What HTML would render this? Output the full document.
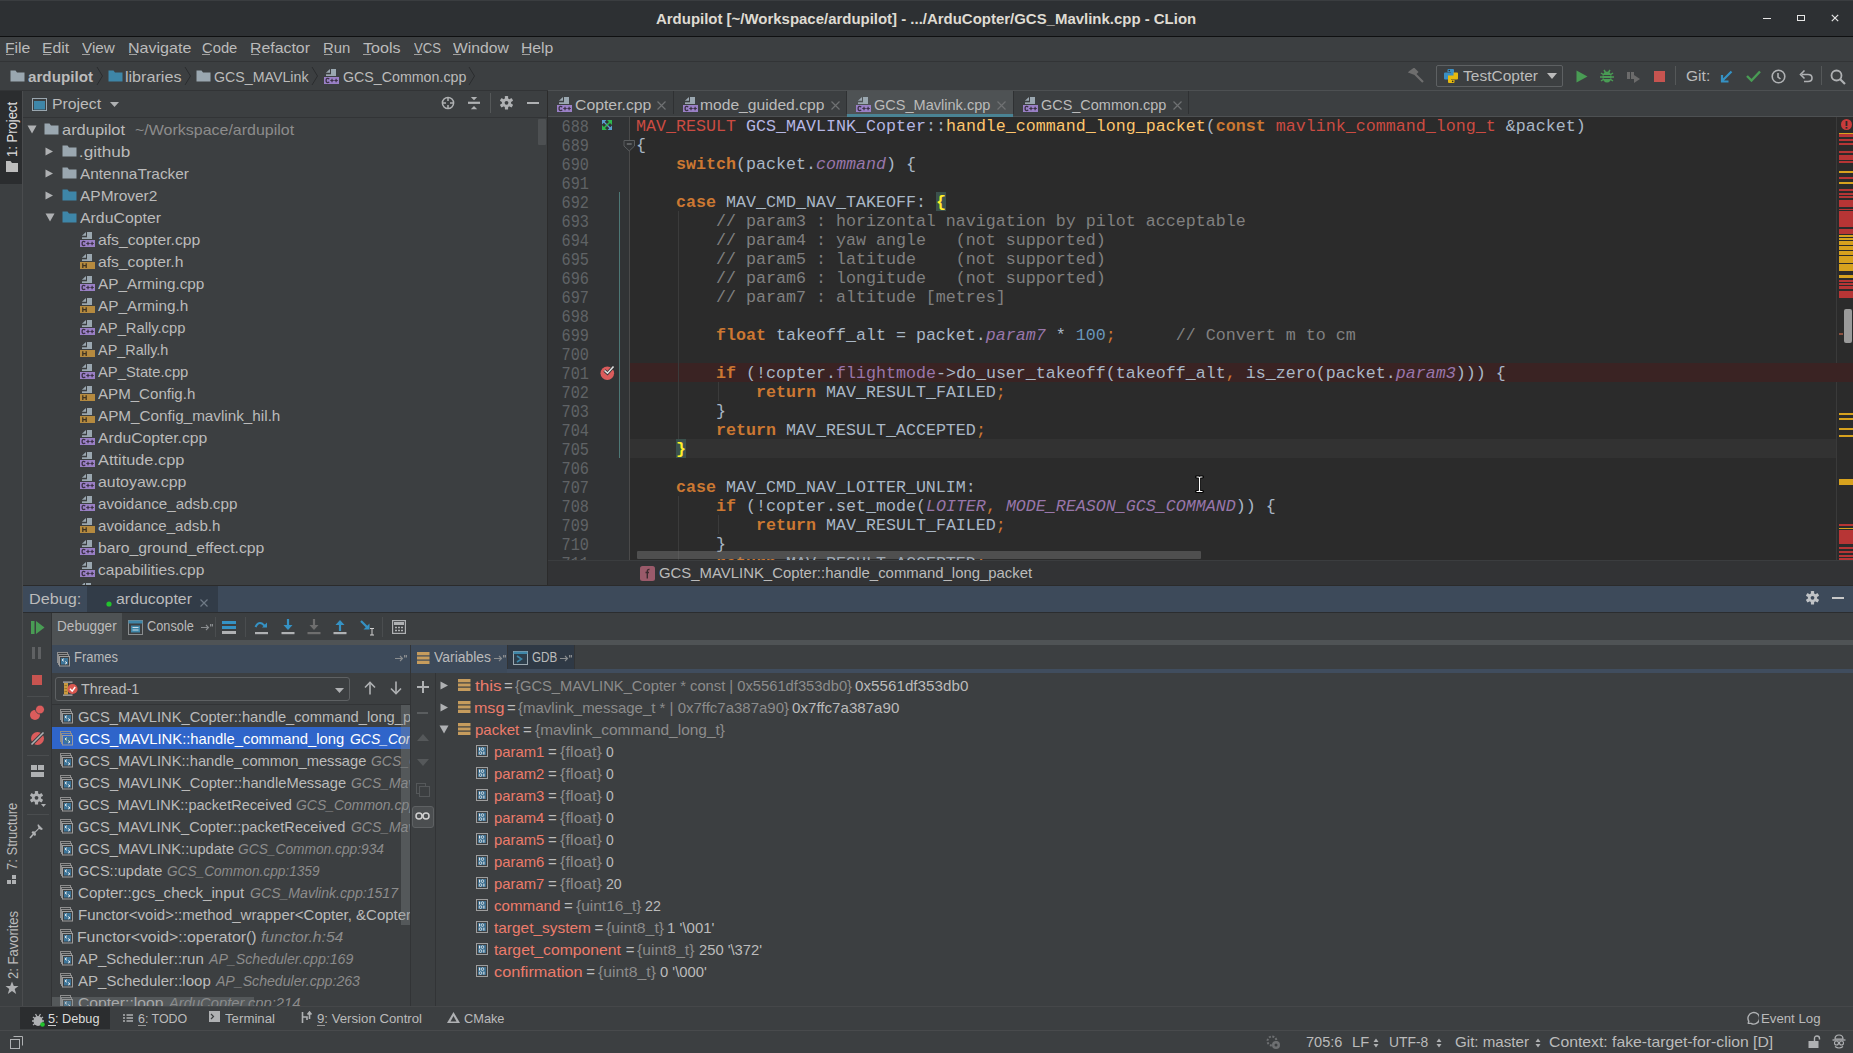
<!DOCTYPE html>
<html><head><meta charset="utf-8"><style>
html,body{margin:0;padding:0;width:1853px;height:1053px;overflow:hidden;background:#3c3f41;}
body{position:relative;font-family:'Liberation Sans', sans-serif;}
.a{position:absolute;}
.t{position:absolute;white-space:nowrap;line-height:0;transform-origin:0 0;}
.cl{position:absolute;white-space:pre;line-height:0;font-family:'Liberation Mono', monospace;font-size:16.667px;color:#a9b7c6;left:636px;}
.k{color:#cc7832;font-weight:bold}
.r{color:#cc4b42}
.f{color:#ffc66d}
.c{color:#808080}
.n{color:#6897bb}
.p{color:#9876aa}
.pi{color:#9876aa;font-style:italic}
.cls{color:#b5b6e3}
.o{color:#cc7832}
</style></head><body>
<div class="a" style="left:0px;top:0px;width:1853px;height:36px;background:#2d3033;"></div>
<div class="a" style="left:0px;top:0px;width:1853px;height:1px;background:#3a3d40;"></div>
<div class="a" style="left:0px;top:36px;width:1853px;height:1px;background:#0f1011;"></div>
<div class="t" id="t0" style="transform:translateX(0.00px) scaleX(0.9969);left:656px;top:19px;font-size:15px;color:#dfdbd2;font-weight:bold;">Ardupilot [~/Workspace/ardupilot] - .../ArduCopter/GCS_Mavlink.cpp - CLion</div>
<div class="a" style="left:1763px;top:18px;width:8px;height:1px;background:#e6e6e6;"></div>
<div class="a" style="left:1797px;top:15px;width:6px;height:4px;border:1.5px solid #e6e6e6"></div>
<svg class="a" style="left:1831px;top:14px;" width="8" height="8" viewBox="0 0 8 8"><path d="M0.8 0.8L7.2 7.2M7.2 0.8L0.8 7.2" stroke="#e6e6e6" stroke-width="1.2"/></svg>
<div class="a" style="left:0px;top:37px;width:1853px;height:24px;background:#3c3f41;"></div>
<div class="a" style="left:0px;top:61px;width:1853px;height:1px;background:#323436;"></div>
<div class="t" id="t1" style="transform:translateX(-1.05px) scaleX(1.0514);left:6px;top:48px;font-size:15px;color:#bbbbbb;">File</div>
<div class="a" style="left:6px;top:54px;width:8px;height:1px;background:#a0a0a0;"></div>
<div class="t" id="t2" style="transform:translateX(-1.05px) scaleX(1.0514);left:43px;top:48px;font-size:15px;color:#bbbbbb;">Edit</div>
<div class="a" style="left:43px;top:54px;width:8px;height:1px;background:#a0a0a0;"></div>
<div class="t" id="t3" style="transform:translateX(0.00px) scaleX(1.0182);left:82px;top:48px;font-size:15px;color:#bbbbbb;">View</div>
<div class="a" style="left:82px;top:54px;width:8px;height:1px;background:#a0a0a0;"></div>
<div class="t" id="t4" style="transform:translateX(-1.07px) scaleX(1.0716);left:129px;top:48px;font-size:15px;color:#bbbbbb;">Navigate</div>
<div class="a" style="left:129px;top:54px;width:8px;height:1px;background:#a0a0a0;"></div>
<div class="t" id="t5" style="transform:translateX(0.00px) scaleX(0.9854);left:202px;top:48px;font-size:15px;color:#bbbbbb;">Code</div>
<div class="a" style="left:202px;top:54px;width:8px;height:1px;background:#a0a0a0;"></div>
<div class="t" id="t6" style="transform:translateX(-1.06px) scaleX(1.0594);left:251px;top:48px;font-size:15px;color:#bbbbbb;">Refactor</div>
<div class="a" style="left:251px;top:54px;width:8px;height:1px;background:#a0a0a0;"></div>
<div class="t" id="t7" style="transform:translateX(-0.99px) scaleX(0.9933);left:324px;top:48px;font-size:15px;color:#bbbbbb;">Run</div>
<div class="a" style="left:324px;top:54px;width:8px;height:1px;background:#a0a0a0;"></div>
<div class="t" id="t8" style="transform:translateX(0.00px) scaleX(1.0719);left:363px;top:48px;font-size:15px;color:#bbbbbb;">Tools</div>
<div class="a" style="left:363px;top:54px;width:8px;height:1px;background:#a0a0a0;"></div>
<div class="t" id="t9" style="transform:translateX(0.00px) scaleX(0.8756);left:414px;top:48px;font-size:15px;color:#bbbbbb;">VCS</div>
<div class="a" style="left:414px;top:54px;width:8px;height:1px;background:#a0a0a0;"></div>
<div class="t" id="t10" style="transform:translateX(0.00px) scaleX(1.0464);left:453px;top:48px;font-size:15px;color:#bbbbbb;">Window</div>
<div class="a" style="left:453px;top:54px;width:8px;height:1px;background:#a0a0a0;"></div>
<div class="t" id="t11" style="transform:translateX(-1.05px) scaleX(1.0506);left:522px;top:48px;font-size:15px;color:#bbbbbb;">Help</div>
<div class="a" style="left:522px;top:54px;width:8px;height:1px;background:#a0a0a0;"></div>
<div class="a" style="left:0px;top:62px;width:1853px;height:28px;background:#3c3f41;"></div>
<div class="a" style="left:0px;top:90px;width:1853px;height:1px;background:#323436;"></div>
<div class="a" style="left:0px;top:91px;width:22px;height:915px;background:#3c3f41;"></div>
<div class="a" style="left:22px;top:91px;width:1px;height:915px;background:#4a4c4e;"></div>
<div class="a" style="left:0px;top:91px;width:22px;height:93px;background:#2b2d2f;"></div>
<div class="a" style="left:23px;top:91px;width:524px;height:494px;background:#3c3f41;"></div>
<div class="a" style="left:23px;top:117px;width:524px;height:1px;background:#323436;"></div>
<div class="a" style="left:547px;top:91px;width:1px;height:494px;background:#2b2b2b;"></div>
<div class="a" style="left:548px;top:91px;width:1305px;height:26px;background:#3c3f41;"></div>
<div class="a" style="left:847px;top:91px;width:166px;height:25px;background:#4e5254;"></div>
<div class="a" style="left:548px;top:90px;width:1305px;height:1px;background:#4d5052;"></div>
<div class="a" style="left:548px;top:116px;width:1305px;height:1px;background:#4d5052;"></div>
<div class="a" style="left:847px;top:114px;width:166px;height:3px;background:#4a8394;"></div>
<div class="a" style="left:548px;top:117px;width:1305px;height:443px;background:#2b2b2b;"></div>
<div class="a" style="left:548px;top:117px;width:82px;height:443px;background:#313335;"></div>
<div class="a" style="left:1836px;top:117px;width:1px;height:443px;background:#3a3a3a;"></div>
<div class="a" style="left:548px;top:560px;width:1305px;height:25px;background:#323335;"></div>
<div class="a" style="left:548px;top:560px;width:1305px;height:1px;background:#3b3d3f;"></div>
<div class="a" style="left:23px;top:585px;width:1830px;height:1px;background:#2b2b2b;"></div>
<div class="a" style="left:23px;top:586px;width:1830px;height:26px;background:#3d4a5a;"></div>
<div class="a" style="left:87px;top:586px;width:131px;height:26px;background:#323c48;"></div>
<div class="a" style="left:23px;top:612px;width:1830px;height:1px;background:#2b2d2f;"></div>
<div class="a" style="left:23px;top:613px;width:1830px;height:27px;background:#3c3f41;"></div>
<div class="a" style="left:52px;top:613px;width:70px;height:27px;background:#4e5254;"></div>
<div class="a" style="left:52px;top:640px;width:1801px;height:5px;background:#4f5355;"></div>
<div class="a" style="left:23px;top:613px;width:28px;height:393px;background:#3c3f41;"></div>
<div class="a" style="left:51px;top:613px;width:1px;height:393px;background:#323436;"></div>
<div class="a" style="left:52px;top:645px;width:358px;height:28px;background:#3d4a5a;"></div>
<div class="a" style="left:410px;top:645px;width:1px;height:361px;background:#323436;"></div>
<div class="a" style="left:411px;top:669px;width:1442px;height:4px;background:#404d5e;"></div>
<div class="a" style="left:411px;top:645px;width:96px;height:28px;background:#3d4a5a;"></div>
<div class="a" style="left:508px;top:645px;width:66px;height:24px;background:#2f3945;"></div>
<div class="a" style="left:435px;top:673px;width:1px;height:333px;background:#323436;"></div>
<div class="a" style="left:0px;top:1006px;width:1853px;height:1px;background:#454749;"></div>
<div class="a" style="left:0px;top:1007px;width:1853px;height:23px;background:#3c3f41;"></div>
<div class="a" style="left:20px;top:1007px;width:90px;height:22px;background:#2b2d2f;"></div>
<div class="a" style="left:0px;top:1030px;width:1853px;height:1px;background:#484a4c;"></div>
<div class="a" style="left:0px;top:1031px;width:1853px;height:22px;background:#3c3f41;"></div>
<svg class="a" style="left:10px;top:70px;" width="15" height="12" viewBox="0 0 15 12"><path d="M0.5 0.5H5.5L7 2.5H14.5V11.5H0.5Z" fill="#9aa7b0"/></svg>
<div class="t" id="t12" style="transform:translateX(0.00px) scaleX(1.0130);left:28px;top:77px;font-size:15px;color:#bbbbbb;font-weight:bold;">ardupilot</div>
<svg class="a" style="left:96px;top:66px;" width="8" height="20" viewBox="0 0 8 20"><path d="M1 1L6.5 10L1 19" stroke="#2a2c2e" stroke-width="1" fill="none"/></svg>
<svg class="a" style="left:108px;top:70px;" width="15" height="12" viewBox="0 0 15 12"><path d="M0.5 0.5H5.5L7 2.5H14.5V11.5H0.5Z" fill="#3e86a8"/></svg>
<div class="t" id="t13" style="transform:translateX(-1.08px) scaleX(1.0781);left:126px;top:77px;font-size:15px;color:#bbbbbb;">libraries</div>
<svg class="a" style="left:184px;top:66px;" width="8" height="20" viewBox="0 0 8 20"><path d="M1 1L6.5 10L1 19" stroke="#2a2c2e" stroke-width="1" fill="none"/></svg>
<svg class="a" style="left:196px;top:70px;" width="15" height="12" viewBox="0 0 15 12"><path d="M0.5 0.5H5.5L7 2.5H14.5V11.5H0.5Z" fill="#9aa7b0"/></svg>
<div class="t" id="t14" style="transform:translateX(0.00px) scaleX(0.9476);left:214px;top:77px;font-size:15px;color:#bbbbbb;">GCS_MAVLink</div>
<svg class="a" style="left:311px;top:66px;" width="8" height="20" viewBox="0 0 8 20"><path d="M1 1L6.5 10L1 19" stroke="#2a2c2e" stroke-width="1" fill="none"/></svg>
<svg class="a" style="left:324px;top:69px;" width="16" height="16" viewBox="0 0 16 16"><path d="M1.9 3.8L6 0V3.8Z" fill="#9aa7b0"/><rect x="7" y="0" width="5" height="7" fill="#9aa7b0"/><rect x="2" y="5.3" width="10" height="1.7" fill="#9aa7b0"/><rect x="0" y="8" width="15" height="7" fill="#9a80c6"/><path d="M5.2 10.1Q4.6 9.4 3.6 9.4Q2.1 9.4 2.1 11.5Q2.1 13.6 3.6 13.6Q4.6 13.6 5.2 12.9" stroke="#3b3145" stroke-width="1.3" fill="none"/><path d="M6.3 11.5h3.4M8 9.8v3.4M10.4 11.5h3.4M12.1 9.8v3.4" stroke="#3b3145" stroke-width="1.2"/></svg>
<div class="t" id="t15" style="transform:translateX(0.00px) scaleX(0.9483);left:343px;top:77px;font-size:15px;color:#bbbbbb;">GCS_Common.cpp</div>
<svg class="a" style="left:468px;top:66px;" width="8" height="20" viewBox="0 0 8 20"><path d="M1 1L6.5 10L1 19" stroke="#2a2c2e" stroke-width="1" fill="none"/></svg>
<svg class="a" style="left:1408px;top:68px;" width="17" height="15" viewBox="0 0 17 15"><path d="M2 4L6 1L9 4L7 6Z M6.5 5.5L15 14" stroke="#6e6e6e" stroke-width="2.2" fill="#6e6e6e"/></svg>
<div class="a" style="left:1436px;top:65px;width:125px;height:20px;border:1px solid #5e6163;border-radius:2px;background:#3c3f41"></div>
<svg class="a" style="left:1444px;top:69px;" width="14" height="14" viewBox="0 0 14 14"><path d="M4.5 0H9Q10 0 10 1V7.5H4.5V10.5H1Q0 10.5 0 9.5V4.5Q0 3.5 1 3.5H7V3H3.5V1Q3.5 0 4.5 0Z" fill="#3a8fc4"/><circle cx="5.3" cy="1.6" r="0.8" fill="#2b2b2b"/><path d="M9.5 14H5Q4 14 4 13V6.5H9.5V3.5H13Q14 3.5 14 4.5V9.5Q14 10.5 13 10.5H7V11H10.5V13Q10.5 14 9.5 14Z" fill="#e5b90f"/><circle cx="8.7" cy="12.4" r="0.8" fill="#2b2b2b"/></svg>
<div class="t" id="t16" style="transform:translateX(0.00px) scaleX(1.0340);left:1463px;top:76px;font-size:15px;color:#bbbbbb;">TestCopter</div>
<svg class="a" style="left:1547px;top:73px;" width="10" height="6" viewBox="0 0 10 6"><path d="M0 0H10L5 6Z" fill="#bbbbbb"/></svg>
<svg class="a" style="left:1576px;top:70px;" width="12" height="13" viewBox="0 0 12 13"><path d="M0.5 0.5L11.5 6.5L0.5 12.5Z" fill="#499c54"/></svg>
<svg class="a" style="left:1600px;top:68px;" width="14" height="15" viewBox="0 0 14 15"><ellipse cx="7" cy="9" rx="4.5" ry="5.5" fill="#499c54"/><path d="M1 5L13 13M13 5L1 13M0 9H14M4 2L5.5 4.5M10 2L8.5 4.5" stroke="#499c54" stroke-width="1.5"/><path d="M3.5 7.5H10.5M3.5 10.5H10.5" stroke="#3c3f41" stroke-width="1.2"/></svg>
<svg class="a" style="left:1627px;top:70px;" width="14" height="14" viewBox="0 0 14 14"><rect x="0" y="2" width="3" height="7" fill="#6b6b6b"/><rect x="4" y="2" width="3" height="7" fill="#6b6b6b"/><path d="M7 5L13 9L7 13Z" fill="#6b6b6b"/></svg>
<div class="a" style="left:1654px;top:71px;width:11px;height:11px;background:#c75450;"></div>
<div class="a" style="left:1675px;top:66px;width:1px;height:19px;background:#555859;"></div>
<div class="t" id="t17" style="transform:translateX(0.00px) scaleX(1.0376);left:1686px;top:76px;font-size:15px;color:#bbbbbb;">Git:</div>
<svg class="a" style="left:1720px;top:70px;" width="13" height="13" viewBox="0 0 13 13"><path d="M11.5 1.5L2 11M2 5V11.5H8.5" stroke="#3592c4" stroke-width="2.2" fill="none"/></svg>
<svg class="a" style="left:1746px;top:70px;" width="15" height="12" viewBox="0 0 15 12"><path d="M1 6L5.5 10.5L14 1.5" stroke="#499c54" stroke-width="2.4" fill="none"/></svg>
<svg class="a" style="left:1771px;top:69px;" width="15" height="15" viewBox="0 0 15 15"><circle cx="7.5" cy="7.5" r="6.3" stroke="#afb1b3" stroke-width="1.6" fill="none"/><path d="M7 4V8L9.5 10" stroke="#afb1b3" stroke-width="1.6" fill="none"/></svg>
<svg class="a" style="left:1799px;top:69px;" width="14" height="14" viewBox="0 0 14 14"><path d="M3 5.5H9Q13 5.5 13 9Q13 12.5 9 12.5H5" stroke="#afb1b3" stroke-width="1.6" fill="none"/><path d="M5.5 1.5L1.5 5.5L5.5 9.5" stroke="#afb1b3" stroke-width="1.6" fill="none"/></svg>
<div class="a" style="left:1821px;top:66px;width:1px;height:19px;background:#555859;"></div>
<svg class="a" style="left:1830px;top:69px;" width="16" height="16" viewBox="0 0 16 16"><circle cx="6.5" cy="6.5" r="5" stroke="#afb1b3" stroke-width="1.8" fill="none"/><path d="M10 10L15 15" stroke="#afb1b3" stroke-width="2.2"/></svg>
<svg class="a" style="left:32px;top:98px;" width="16" height="14" viewBox="0 0 16 14"><rect x="0.5" y="0.5" width="14" height="12" fill="none" stroke="#9aa7b0"/><rect x="2" y="3" width="11" height="8.5" fill="#3e86a8"/></svg>
<div class="t" id="t18" style="transform:translateX(-1.05px) scaleX(1.0534);left:53px;top:104px;font-size:15px;color:#bbbbbb;">Project</div>
<svg class="a" style="left:110px;top:102px;" width="9" height="5" viewBox="0 0 9 5"><path d="M0 0H9L4.5 5Z" fill="#afb1b3"/></svg>
<svg class="a" style="left:441px;top:96px;" width="14" height="14" viewBox="0 0 14 14"><circle cx="7" cy="7" r="5.6" stroke="#afb1b3" stroke-width="1.5" fill="none"/><path d="M7 1.5V5M7 9V12.5M1.5 7H5M9 7H12.5" stroke="#afb1b3" stroke-width="1.5"/></svg>
<svg class="a" style="left:467px;top:96px;" width="14" height="14" viewBox="0 0 14 14"><path d="M3.8 1H10.2L7 4.2Z" fill="#afb1b3"/><rect x="1" y="5.7" width="12" height="2.2" fill="#afb1b3"/><path d="M3.8 13.3H10.2L7 10Z" fill="#afb1b3"/></svg>
<div class="a" style="left:490px;top:93px;width:1px;height:20px;background:#555859;"></div>
<svg class="a" style="left:500px;top:96px;" width="13" height="14" viewBox="0 0 13 14"><g transform="translate(6.5 6.8)"><circle r="4.6" fill="#afb1b3"/><rect x="-1.6" y="-6.8" width="3.2" height="3" rx="0.6" fill="#afb1b3" transform="rotate(0)"/><rect x="-1.6" y="-6.8" width="3.2" height="3" rx="0.6" fill="#afb1b3" transform="rotate(60)"/><rect x="-1.6" y="-6.8" width="3.2" height="3" rx="0.6" fill="#afb1b3" transform="rotate(120)"/><rect x="-1.6" y="-6.8" width="3.2" height="3" rx="0.6" fill="#afb1b3" transform="rotate(180)"/><rect x="-1.6" y="-6.8" width="3.2" height="3" rx="0.6" fill="#afb1b3" transform="rotate(240)"/><rect x="-1.6" y="-6.8" width="3.2" height="3" rx="0.6" fill="#afb1b3" transform="rotate(300)"/><circle r="1.9" fill="#3c3f41"/></g></svg>
<div class="a" style="left:527px;top:102px;width:12px;height:2px;background:#afb1b3;"></div>
<div class="a" style="left:538px;top:119px;width:8px;height:26px;background:#4d5052;border-radius:1px"></div>
<svg class="a" style="left:27px;top:125px;" width="10" height="9" viewBox="0 0 10 9"><path d="M0.5 0.5H9.5L5 8.5Z" fill="#afb1b3"/></svg>
<svg class="a" style="left:44px;top:123px;" width="15" height="12" viewBox="0 0 15 12"><path d="M0.5 0.5H5.5L7 2.5H14.5V11.5H0.5Z" fill="#9aa7b0"/></svg>
<div class="t" id="t19" style="transform:translateX(0.00px) scaleX(1.0964);left:62px;top:130px;font-size:15px;color:#bbbbbb;">ardupilot</div>
<div class="t" id="t20" style="transform:translateX(0.00px) scaleX(1.0651);left:135px;top:130px;font-size:15px;color:#8c8c8c;">~/Workspace/ardupilot</div>
<svg class="a" style="left:45px;top:147px;" width="9" height="9" viewBox="0 0 9 9"><path d="M0.5 0.5L8 4.5L0.5 8.5Z" fill="#afb1b3"/></svg>
<svg class="a" style="left:62px;top:145px;" width="15" height="12" viewBox="0 0 15 12"><path d="M0.5 0.5H5.5L7 2.5H14.5V11.5H0.5Z" fill="#9aa7b0"/></svg>
<div class="t" id="t21" style="transform:translateX(-1.14px) scaleX(1.1443);left:80px;top:152px;font-size:15px;color:#bbbbbb;">.github</div>
<svg class="a" style="left:45px;top:169px;" width="9" height="9" viewBox="0 0 9 9"><path d="M0.5 0.5L8 4.5L0.5 8.5Z" fill="#afb1b3"/></svg>
<svg class="a" style="left:62px;top:167px;" width="15" height="12" viewBox="0 0 15 12"><path d="M0.5 0.5H5.5L7 2.5H14.5V11.5H0.5Z" fill="#9aa7b0"/></svg>
<div class="t" id="t22" style="transform:translateX(0.00px) scaleX(1.0267);left:80px;top:174px;font-size:15px;color:#bbbbbb;">AntennaTracker</div>
<svg class="a" style="left:45px;top:191px;" width="9" height="9" viewBox="0 0 9 9"><path d="M0.5 0.5L8 4.5L0.5 8.5Z" fill="#afb1b3"/></svg>
<svg class="a" style="left:62px;top:189px;" width="15" height="12" viewBox="0 0 15 12"><path d="M0.5 0.5H5.5L7 2.5H14.5V11.5H0.5Z" fill="#3e86a8"/></svg>
<div class="t" id="t23" style="transform:translateX(0.00px) scaleX(1.0311);left:80px;top:196px;font-size:15px;color:#bbbbbb;">APMrover2</div>
<svg class="a" style="left:45px;top:213px;" width="10" height="9" viewBox="0 0 10 9"><path d="M0.5 0.5H9.5L5 8.5Z" fill="#afb1b3"/></svg>
<svg class="a" style="left:62px;top:211px;" width="15" height="12" viewBox="0 0 15 12"><path d="M0.5 0.5H5.5L7 2.5H14.5V11.5H0.5Z" fill="#3e86a8"/></svg>
<div class="t" id="t24" style="transform:translateX(0.00px) scaleX(1.0559);left:80px;top:218px;font-size:15px;color:#bbbbbb;">ArduCopter</div>
<svg class="a" style="left:80px;top:232px;" width="16" height="16" viewBox="0 0 16 16"><path d="M1.9 3.8L6 0V3.8Z" fill="#9aa7b0"/><rect x="7" y="0" width="5" height="7" fill="#9aa7b0"/><rect x="2" y="5.3" width="10" height="1.7" fill="#9aa7b0"/><rect x="0" y="8" width="15" height="7" fill="#9a80c6"/><path d="M5.2 10.1Q4.6 9.4 3.6 9.4Q2.1 9.4 2.1 11.5Q2.1 13.6 3.6 13.6Q4.6 13.6 5.2 12.9" stroke="#3b3145" stroke-width="1.3" fill="none"/><path d="M6.3 11.5h3.4M8 9.8v3.4M10.4 11.5h3.4M12.1 9.8v3.4" stroke="#3b3145" stroke-width="1.2"/></svg>
<div class="t" id="t25" style="transform:translateX(0.00px) scaleX(1.0491);left:98px;top:240px;font-size:15px;color:#bbbbbb;">afs_copter.cpp</div>
<svg class="a" style="left:80px;top:254px;" width="16" height="16" viewBox="0 0 16 16"><path d="M1.9 3.8L6 0V3.8Z" fill="#9aa7b0"/><rect x="7" y="0" width="5" height="7" fill="#9aa7b0"/><rect x="2" y="5.3" width="10" height="1.7" fill="#9aa7b0"/><rect x="0" y="8" width="15" height="7" fill="#b58a3f"/><path d="M2.8 9.2v4.8M6.2 9.2v4.8M2.8 11.6h3.4" stroke="#3f3423" stroke-width="1.3"/></svg>
<div class="t" id="t26" style="transform:translateX(0.00px) scaleX(1.0445);left:98px;top:262px;font-size:15px;color:#bbbbbb;">afs_copter.h</div>
<svg class="a" style="left:80px;top:276px;" width="16" height="16" viewBox="0 0 16 16"><path d="M1.9 3.8L6 0V3.8Z" fill="#9aa7b0"/><rect x="7" y="0" width="5" height="7" fill="#9aa7b0"/><rect x="2" y="5.3" width="10" height="1.7" fill="#9aa7b0"/><rect x="0" y="8" width="15" height="7" fill="#9a80c6"/><path d="M5.2 10.1Q4.6 9.4 3.6 9.4Q2.1 9.4 2.1 11.5Q2.1 13.6 3.6 13.6Q4.6 13.6 5.2 12.9" stroke="#3b3145" stroke-width="1.3" fill="none"/><path d="M6.3 11.5h3.4M8 9.8v3.4M10.4 11.5h3.4M12.1 9.8v3.4" stroke="#3b3145" stroke-width="1.2"/></svg>
<div class="t" id="t27" style="transform:translateX(0.00px) scaleX(1.0205);left:98px;top:284px;font-size:15px;color:#bbbbbb;">AP_Arming.cpp</div>
<svg class="a" style="left:80px;top:298px;" width="16" height="16" viewBox="0 0 16 16"><path d="M1.9 3.8L6 0V3.8Z" fill="#9aa7b0"/><rect x="7" y="0" width="5" height="7" fill="#9aa7b0"/><rect x="2" y="5.3" width="10" height="1.7" fill="#9aa7b0"/><rect x="0" y="8" width="15" height="7" fill="#b58a3f"/><path d="M2.8 9.2v4.8M6.2 9.2v4.8M2.8 11.6h3.4" stroke="#3f3423" stroke-width="1.3"/></svg>
<div class="t" id="t28" style="transform:translateX(0.00px) scaleX(1.0224);left:98px;top:306px;font-size:15px;color:#bbbbbb;">AP_Arming.h</div>
<svg class="a" style="left:80px;top:320px;" width="16" height="16" viewBox="0 0 16 16"><path d="M1.9 3.8L6 0V3.8Z" fill="#9aa7b0"/><rect x="7" y="0" width="5" height="7" fill="#9aa7b0"/><rect x="2" y="5.3" width="10" height="1.7" fill="#9aa7b0"/><rect x="0" y="8" width="15" height="7" fill="#9a80c6"/><path d="M5.2 10.1Q4.6 9.4 3.6 9.4Q2.1 9.4 2.1 11.5Q2.1 13.6 3.6 13.6Q4.6 13.6 5.2 12.9" stroke="#3b3145" stroke-width="1.3" fill="none"/><path d="M6.3 11.5h3.4M8 9.8v3.4M10.4 11.5h3.4M12.1 9.8v3.4" stroke="#3b3145" stroke-width="1.2"/></svg>
<div class="t" id="t29" style="transform:translateX(0.00px) scaleX(0.9821);left:98px;top:328px;font-size:15px;color:#bbbbbb;">AP_Rally.cpp</div>
<svg class="a" style="left:80px;top:342px;" width="16" height="16" viewBox="0 0 16 16"><path d="M1.9 3.8L6 0V3.8Z" fill="#9aa7b0"/><rect x="7" y="0" width="5" height="7" fill="#9aa7b0"/><rect x="2" y="5.3" width="10" height="1.7" fill="#9aa7b0"/><rect x="0" y="8" width="15" height="7" fill="#b58a3f"/><path d="M2.8 9.2v4.8M6.2 9.2v4.8M2.8 11.6h3.4" stroke="#3f3423" stroke-width="1.3"/></svg>
<div class="t" id="t30" style="transform:translateX(0.00px) scaleX(0.9623);left:98px;top:350px;font-size:15px;color:#bbbbbb;">AP_Rally.h</div>
<svg class="a" style="left:80px;top:364px;" width="16" height="16" viewBox="0 0 16 16"><path d="M1.9 3.8L6 0V3.8Z" fill="#9aa7b0"/><rect x="7" y="0" width="5" height="7" fill="#9aa7b0"/><rect x="2" y="5.3" width="10" height="1.7" fill="#9aa7b0"/><rect x="0" y="8" width="15" height="7" fill="#9a80c6"/><path d="M5.2 10.1Q4.6 9.4 3.6 9.4Q2.1 9.4 2.1 11.5Q2.1 13.6 3.6 13.6Q4.6 13.6 5.2 12.9" stroke="#3b3145" stroke-width="1.3" fill="none"/><path d="M6.3 11.5h3.4M8 9.8v3.4M10.4 11.5h3.4M12.1 9.8v3.4" stroke="#3b3145" stroke-width="1.2"/></svg>
<div class="t" id="t31" style="transform:translateX(0.00px) scaleX(0.9848);left:98px;top:372px;font-size:15px;color:#bbbbbb;">AP_State.cpp</div>
<svg class="a" style="left:80px;top:386px;" width="16" height="16" viewBox="0 0 16 16"><path d="M1.9 3.8L6 0V3.8Z" fill="#9aa7b0"/><rect x="7" y="0" width="5" height="7" fill="#9aa7b0"/><rect x="2" y="5.3" width="10" height="1.7" fill="#9aa7b0"/><rect x="0" y="8" width="15" height="7" fill="#b58a3f"/><path d="M2.8 9.2v4.8M6.2 9.2v4.8M2.8 11.6h3.4" stroke="#3f3423" stroke-width="1.3"/></svg>
<div class="t" id="t32" style="transform:translateX(0.00px) scaleX(1.0065);left:98px;top:394px;font-size:15px;color:#bbbbbb;">APM_Config.h</div>
<svg class="a" style="left:80px;top:408px;" width="16" height="16" viewBox="0 0 16 16"><path d="M1.9 3.8L6 0V3.8Z" fill="#9aa7b0"/><rect x="7" y="0" width="5" height="7" fill="#9aa7b0"/><rect x="2" y="5.3" width="10" height="1.7" fill="#9aa7b0"/><rect x="0" y="8" width="15" height="7" fill="#b58a3f"/><path d="M2.8 9.2v4.8M6.2 9.2v4.8M2.8 11.6h3.4" stroke="#3f3423" stroke-width="1.3"/></svg>
<div class="t" id="t33" style="transform:translateX(0.00px) scaleX(1.0173);left:98px;top:416px;font-size:15px;color:#bbbbbb;">APM_Config_mavlink_hil.h</div>
<svg class="a" style="left:80px;top:430px;" width="16" height="16" viewBox="0 0 16 16"><path d="M1.9 3.8L6 0V3.8Z" fill="#9aa7b0"/><rect x="7" y="0" width="5" height="7" fill="#9aa7b0"/><rect x="2" y="5.3" width="10" height="1.7" fill="#9aa7b0"/><rect x="0" y="8" width="15" height="7" fill="#9a80c6"/><path d="M5.2 10.1Q4.6 9.4 3.6 9.4Q2.1 9.4 2.1 11.5Q2.1 13.6 3.6 13.6Q4.6 13.6 5.2 12.9" stroke="#3b3145" stroke-width="1.3" fill="none"/><path d="M6.3 11.5h3.4M8 9.8v3.4M10.4 11.5h3.4M12.1 9.8v3.4" stroke="#3b3145" stroke-width="1.2"/></svg>
<div class="t" id="t34" style="transform:translateX(0.00px) scaleX(1.0492);left:98px;top:438px;font-size:15px;color:#bbbbbb;">ArduCopter.cpp</div>
<svg class="a" style="left:80px;top:452px;" width="16" height="16" viewBox="0 0 16 16"><path d="M1.9 3.8L6 0V3.8Z" fill="#9aa7b0"/><rect x="7" y="0" width="5" height="7" fill="#9aa7b0"/><rect x="2" y="5.3" width="10" height="1.7" fill="#9aa7b0"/><rect x="0" y="8" width="15" height="7" fill="#9a80c6"/><path d="M5.2 10.1Q4.6 9.4 3.6 9.4Q2.1 9.4 2.1 11.5Q2.1 13.6 3.6 13.6Q4.6 13.6 5.2 12.9" stroke="#3b3145" stroke-width="1.3" fill="none"/><path d="M6.3 11.5h3.4M8 9.8v3.4M10.4 11.5h3.4M12.1 9.8v3.4" stroke="#3b3145" stroke-width="1.2"/></svg>
<div class="t" id="t35" style="transform:translateX(0.00px) scaleX(1.0903);left:98px;top:460px;font-size:15px;color:#bbbbbb;">Attitude.cpp</div>
<svg class="a" style="left:80px;top:474px;" width="16" height="16" viewBox="0 0 16 16"><path d="M1.9 3.8L6 0V3.8Z" fill="#9aa7b0"/><rect x="7" y="0" width="5" height="7" fill="#9aa7b0"/><rect x="2" y="5.3" width="10" height="1.7" fill="#9aa7b0"/><rect x="0" y="8" width="15" height="7" fill="#9a80c6"/><path d="M5.2 10.1Q4.6 9.4 3.6 9.4Q2.1 9.4 2.1 11.5Q2.1 13.6 3.6 13.6Q4.6 13.6 5.2 12.9" stroke="#3b3145" stroke-width="1.3" fill="none"/><path d="M6.3 11.5h3.4M8 9.8v3.4M10.4 11.5h3.4M12.1 9.8v3.4" stroke="#3b3145" stroke-width="1.2"/></svg>
<div class="t" id="t36" style="transform:translateX(0.00px) scaleX(1.0596);left:98px;top:482px;font-size:15px;color:#bbbbbb;">autoyaw.cpp</div>
<svg class="a" style="left:80px;top:496px;" width="16" height="16" viewBox="0 0 16 16"><path d="M1.9 3.8L6 0V3.8Z" fill="#9aa7b0"/><rect x="7" y="0" width="5" height="7" fill="#9aa7b0"/><rect x="2" y="5.3" width="10" height="1.7" fill="#9aa7b0"/><rect x="0" y="8" width="15" height="7" fill="#9a80c6"/><path d="M5.2 10.1Q4.6 9.4 3.6 9.4Q2.1 9.4 2.1 11.5Q2.1 13.6 3.6 13.6Q4.6 13.6 5.2 12.9" stroke="#3b3145" stroke-width="1.3" fill="none"/><path d="M6.3 11.5h3.4M8 9.8v3.4M10.4 11.5h3.4M12.1 9.8v3.4" stroke="#3b3145" stroke-width="1.2"/></svg>
<div class="t" id="t37" style="transform:translateX(0.00px) scaleX(1.0126);left:98px;top:504px;font-size:15px;color:#bbbbbb;">avoidance_adsb.cpp</div>
<svg class="a" style="left:80px;top:518px;" width="16" height="16" viewBox="0 0 16 16"><path d="M1.9 3.8L6 0V3.8Z" fill="#9aa7b0"/><rect x="7" y="0" width="5" height="7" fill="#9aa7b0"/><rect x="2" y="5.3" width="10" height="1.7" fill="#9aa7b0"/><rect x="0" y="8" width="15" height="7" fill="#b58a3f"/><path d="M2.8 9.2v4.8M6.2 9.2v4.8M2.8 11.6h3.4" stroke="#3f3423" stroke-width="1.3"/></svg>
<div class="t" id="t38" style="transform:translateX(0.00px) scaleX(1.0048);left:98px;top:526px;font-size:15px;color:#bbbbbb;">avoidance_adsb.h</div>
<svg class="a" style="left:80px;top:540px;" width="16" height="16" viewBox="0 0 16 16"><path d="M1.9 3.8L6 0V3.8Z" fill="#9aa7b0"/><rect x="7" y="0" width="5" height="7" fill="#9aa7b0"/><rect x="2" y="5.3" width="10" height="1.7" fill="#9aa7b0"/><rect x="0" y="8" width="15" height="7" fill="#9a80c6"/><path d="M5.2 10.1Q4.6 9.4 3.6 9.4Q2.1 9.4 2.1 11.5Q2.1 13.6 3.6 13.6Q4.6 13.6 5.2 12.9" stroke="#3b3145" stroke-width="1.3" fill="none"/><path d="M6.3 11.5h3.4M8 9.8v3.4M10.4 11.5h3.4M12.1 9.8v3.4" stroke="#3b3145" stroke-width="1.2"/></svg>
<div class="t" id="t39" style="transform:translateX(0.00px) scaleX(1.0517);left:98px;top:548px;font-size:15px;color:#bbbbbb;">baro_ground_effect.cpp</div>
<svg class="a" style="left:80px;top:562px;" width="16" height="16" viewBox="0 0 16 16"><path d="M1.9 3.8L6 0V3.8Z" fill="#9aa7b0"/><rect x="7" y="0" width="5" height="7" fill="#9aa7b0"/><rect x="2" y="5.3" width="10" height="1.7" fill="#9aa7b0"/><rect x="0" y="8" width="15" height="7" fill="#9a80c6"/><path d="M5.2 10.1Q4.6 9.4 3.6 9.4Q2.1 9.4 2.1 11.5Q2.1 13.6 3.6 13.6Q4.6 13.6 5.2 12.9" stroke="#3b3145" stroke-width="1.3" fill="none"/><path d="M6.3 11.5h3.4M8 9.8v3.4M10.4 11.5h3.4M12.1 9.8v3.4" stroke="#3b3145" stroke-width="1.2"/></svg>
<div class="t" id="t40" style="transform:translateX(0.00px) scaleX(1.0370);left:98px;top:570px;font-size:15px;color:#bbbbbb;">capabilities.cpp</div>
<div class="a" style="left:5px;top:157px;"><div style="position:absolute;left:0;top:0;transform:rotate(-90deg) scaleX(0.93);transform-origin:0 0;white-space:nowrap;font-size:14px;line-height:15px;color:#dddddd">1: Project</div></div>
<svg class="a" style="left:6px;top:161px;" width="12" height="11" viewBox="0 0 12 11"><path d="M0 0H4.5L6 2H12V11H0Z" fill="#bdbdbd"/></svg>
<div class="a" style="left:5px;top:870px;"><div style="position:absolute;left:0;top:0;transform:rotate(-90deg) scaleX(0.93);transform-origin:0 0;white-space:nowrap;font-size:14px;line-height:15px;color:#bbbbbb">7: Structure</div></div>
<svg class="a" style="left:7px;top:875px;" width="10" height="10" viewBox="0 0 10 10"><rect x="0" y="5" width="4" height="4" fill="#afb1b3"/><rect x="5" y="5" width="4" height="4" fill="#afb1b3"/><rect x="5" y="0" width="4" height="4" fill="#afb1b3"/></svg>
<div class="a" style="left:6px;top:979px;"><div style="position:absolute;left:0;top:0;transform:rotate(-90deg) scaleX(0.93);transform-origin:0 0;white-space:nowrap;font-size:14px;line-height:15px;color:#bbbbbb">2: Favorites</div></div>
<svg class="a" style="left:5px;top:981px;" width="14" height="14" viewBox="0 0 14 14"><path d="M7 0.5L8.8 5H13.5L9.7 8L11.2 13L7 10L2.8 13L4.3 8L0.5 5H5.2Z" fill="#afb1b3"/></svg>
<svg class="a" style="left:557px;top:97px;" width="16" height="16" viewBox="0 0 16 16"><path d="M1.9 3.8L6 0V3.8Z" fill="#9aa7b0"/><rect x="7" y="0" width="5" height="7" fill="#9aa7b0"/><rect x="2" y="5.3" width="10" height="1.7" fill="#9aa7b0"/><rect x="0" y="8" width="15" height="7" fill="#9a80c6"/><path d="M5.2 10.1Q4.6 9.4 3.6 9.4Q2.1 9.4 2.1 11.5Q2.1 13.6 3.6 13.6Q4.6 13.6 5.2 12.9" stroke="#3b3145" stroke-width="1.3" fill="none"/><path d="M6.3 11.5h3.4M8 9.8v3.4M10.4 11.5h3.4M12.1 9.8v3.4" stroke="#3b3145" stroke-width="1.2"/></svg>
<div class="t" id="t41" style="transform:translateX(0.00px) scaleX(1.0526);left:575px;top:105px;font-size:15px;color:#bbbbbb;">Copter.cpp</div>
<svg class="a" style="left:657px;top:101px;" width="9" height="9" viewBox="0 0 9 9"><path d="M0.5 0.5L8.5 8.5M8.5 0.5L0.5 8.5" stroke="#6f7173" stroke-width="1.2"/></svg>
<div class="a" style="left:673px;top:91px;width:1px;height:23px;background:#2f3133;"></div>
<svg class="a" style="left:683px;top:97px;" width="16" height="16" viewBox="0 0 16 16"><path d="M1.9 3.8L6 0V3.8Z" fill="#9aa7b0"/><rect x="7" y="0" width="5" height="7" fill="#9aa7b0"/><rect x="2" y="5.3" width="10" height="1.7" fill="#9aa7b0"/><rect x="0" y="8" width="15" height="7" fill="#9a80c6"/><path d="M5.2 10.1Q4.6 9.4 3.6 9.4Q2.1 9.4 2.1 11.5Q2.1 13.6 3.6 13.6Q4.6 13.6 5.2 12.9" stroke="#3b3145" stroke-width="1.3" fill="none"/><path d="M6.3 11.5h3.4M8 9.8v3.4M10.4 11.5h3.4M12.1 9.8v3.4" stroke="#3b3145" stroke-width="1.2"/></svg>
<div class="t" id="t42" style="transform:translateX(-1.04px) scaleX(1.0431);left:701px;top:105px;font-size:15px;color:#bbbbbb;">mode_guided.cpp</div>
<svg class="a" style="left:831px;top:101px;" width="9" height="9" viewBox="0 0 9 9"><path d="M0.5 0.5L8.5 8.5M8.5 0.5L0.5 8.5" stroke="#6f7173" stroke-width="1.2"/></svg>
<div class="a" style="left:846px;top:91px;width:1px;height:23px;background:#2f3133;"></div>
<svg class="a" style="left:856px;top:97px;" width="16" height="16" viewBox="0 0 16 16"><path d="M1.9 3.8L6 0V3.8Z" fill="#9aa7b0"/><rect x="7" y="0" width="5" height="7" fill="#9aa7b0"/><rect x="2" y="5.3" width="10" height="1.7" fill="#9aa7b0"/><rect x="0" y="8" width="15" height="7" fill="#9a80c6"/><path d="M5.2 10.1Q4.6 9.4 3.6 9.4Q2.1 9.4 2.1 11.5Q2.1 13.6 3.6 13.6Q4.6 13.6 5.2 12.9" stroke="#3b3145" stroke-width="1.3" fill="none"/><path d="M6.3 11.5h3.4M8 9.8v3.4M10.4 11.5h3.4M12.1 9.8v3.4" stroke="#3b3145" stroke-width="1.2"/></svg>
<div class="t" id="t43" style="transform:translateX(0.00px) scaleX(0.9691);left:874px;top:105px;font-size:15px;color:#bbbbbb;">GCS_Mavlink.cpp</div>
<svg class="a" style="left:997px;top:101px;" width="9" height="9" viewBox="0 0 9 9"><path d="M0.5 0.5L8.5 8.5M8.5 0.5L0.5 8.5" stroke="#6f7173" stroke-width="1.2"/></svg>
<div class="a" style="left:1013px;top:91px;width:1px;height:23px;background:#2f3133;"></div>
<svg class="a" style="left:1023px;top:97px;" width="16" height="16" viewBox="0 0 16 16"><path d="M1.9 3.8L6 0V3.8Z" fill="#9aa7b0"/><rect x="7" y="0" width="5" height="7" fill="#9aa7b0"/><rect x="2" y="5.3" width="10" height="1.7" fill="#9aa7b0"/><rect x="0" y="8" width="15" height="7" fill="#9a80c6"/><path d="M5.2 10.1Q4.6 9.4 3.6 9.4Q2.1 9.4 2.1 11.5Q2.1 13.6 3.6 13.6Q4.6 13.6 5.2 12.9" stroke="#3b3145" stroke-width="1.3" fill="none"/><path d="M6.3 11.5h3.4M8 9.8v3.4M10.4 11.5h3.4M12.1 9.8v3.4" stroke="#3b3145" stroke-width="1.2"/></svg>
<div class="t" id="t44" style="transform:translateX(0.00px) scaleX(0.9637);left:1041px;top:105px;font-size:15px;color:#bbbbbb;">GCS_Common.cpp</div>
<svg class="a" style="left:1173px;top:101px;" width="9" height="9" viewBox="0 0 9 9"><path d="M0.5 0.5L8.5 8.5M8.5 0.5L0.5 8.5" stroke="#6f7173" stroke-width="1.2"/></svg>
<div class="a" style="left:1188px;top:91px;width:1px;height:23px;background:#2f3133;"></div>
<div class="a" style="left:630px;top:363px;width:1223px;height:19px;background:#3a2323;"></div>
<div class="a" style="left:630px;top:439px;width:1206px;height:19px;background:#323232;"></div>
<div class="a" style="left:0px;top:117px;width:630px;height:443px;overflow:hidden">
<div class="cl" style="left:529px;width:60px;text-align:right;top:10px;color:#606366;font-size:17.5px;transform:scaleX(0.87);transform-origin:100% 0">688</div>
<div class="cl" style="left:529px;width:60px;text-align:right;top:29px;color:#606366;font-size:17.5px;transform:scaleX(0.87);transform-origin:100% 0">689</div>
<div class="cl" style="left:529px;width:60px;text-align:right;top:48px;color:#606366;font-size:17.5px;transform:scaleX(0.87);transform-origin:100% 0">690</div>
<div class="cl" style="left:529px;width:60px;text-align:right;top:67px;color:#606366;font-size:17.5px;transform:scaleX(0.87);transform-origin:100% 0">691</div>
<div class="cl" style="left:529px;width:60px;text-align:right;top:86px;color:#606366;font-size:17.5px;transform:scaleX(0.87);transform-origin:100% 0">692</div>
<div class="cl" style="left:529px;width:60px;text-align:right;top:105px;color:#606366;font-size:17.5px;transform:scaleX(0.87);transform-origin:100% 0">693</div>
<div class="cl" style="left:529px;width:60px;text-align:right;top:124px;color:#606366;font-size:17.5px;transform:scaleX(0.87);transform-origin:100% 0">694</div>
<div class="cl" style="left:529px;width:60px;text-align:right;top:143px;color:#606366;font-size:17.5px;transform:scaleX(0.87);transform-origin:100% 0">695</div>
<div class="cl" style="left:529px;width:60px;text-align:right;top:162px;color:#606366;font-size:17.5px;transform:scaleX(0.87);transform-origin:100% 0">696</div>
<div class="cl" style="left:529px;width:60px;text-align:right;top:181px;color:#606366;font-size:17.5px;transform:scaleX(0.87);transform-origin:100% 0">697</div>
<div class="cl" style="left:529px;width:60px;text-align:right;top:200px;color:#606366;font-size:17.5px;transform:scaleX(0.87);transform-origin:100% 0">698</div>
<div class="cl" style="left:529px;width:60px;text-align:right;top:219px;color:#606366;font-size:17.5px;transform:scaleX(0.87);transform-origin:100% 0">699</div>
<div class="cl" style="left:529px;width:60px;text-align:right;top:238px;color:#606366;font-size:17.5px;transform:scaleX(0.87);transform-origin:100% 0">700</div>
<div class="cl" style="left:529px;width:60px;text-align:right;top:257px;color:#606366;font-size:17.5px;transform:scaleX(0.87);transform-origin:100% 0">701</div>
<div class="cl" style="left:529px;width:60px;text-align:right;top:276px;color:#606366;font-size:17.5px;transform:scaleX(0.87);transform-origin:100% 0">702</div>
<div class="cl" style="left:529px;width:60px;text-align:right;top:295px;color:#606366;font-size:17.5px;transform:scaleX(0.87);transform-origin:100% 0">703</div>
<div class="cl" style="left:529px;width:60px;text-align:right;top:314px;color:#606366;font-size:17.5px;transform:scaleX(0.87);transform-origin:100% 0">704</div>
<div class="cl" style="left:529px;width:60px;text-align:right;top:333px;color:#606366;font-size:17.5px;transform:scaleX(0.87);transform-origin:100% 0">705</div>
<div class="cl" style="left:529px;width:60px;text-align:right;top:352px;color:#606366;font-size:17.5px;transform:scaleX(0.87);transform-origin:100% 0">706</div>
<div class="cl" style="left:529px;width:60px;text-align:right;top:371px;color:#606366;font-size:17.5px;transform:scaleX(0.87);transform-origin:100% 0">707</div>
<div class="cl" style="left:529px;width:60px;text-align:right;top:390px;color:#606366;font-size:17.5px;transform:scaleX(0.87);transform-origin:100% 0">708</div>
<div class="cl" style="left:529px;width:60px;text-align:right;top:409px;color:#606366;font-size:17.5px;transform:scaleX(0.87);transform-origin:100% 0">709</div>
<div class="cl" style="left:529px;width:60px;text-align:right;top:428px;color:#606366;font-size:17.5px;transform:scaleX(0.87);transform-origin:100% 0">710</div>
<div class="cl" style="left:529px;width:60px;text-align:right;top:447px;color:#606366;font-size:17.5px;transform:scaleX(0.87);transform-origin:100% 0">711</div>
</div>
<div class="a" style="left:619px;top:192px;width:1px;height:266px;background:#4d7775;"></div>
<div class="a" style="left:629px;top:117px;width:1px;height:443px;background:#4a4a4a;"></div>
<svg class="a" style="left:623px;top:140px;" width="13" height="12" viewBox="0 0 13 12"><path d="M1 0.5H11.5V6L6.25 11L1 6Z" fill="#313335" stroke="#5a5d5f"/><path d="M3.8 4H8.7" stroke="#8a8d8f"/></svg>
<div class="a" style="left:678px;top:211px;width:1px;height:228px;background:#3b3b3b;"></div>
<div class="a" style="left:678px;top:496px;width:1px;height:64px;background:#3b3b3b;"></div>
<div class="a" style="left:718px;top:382px;width:1px;height:19px;background:#3b3b3b;"></div>
<div class="a" style="left:718px;top:515px;width:1px;height:19px;background:#3b3b3b;"></div>
<div class="a" style="left:936px;top:192px;width:10px;height:19px;background:#3b514d;"></div>
<div class="a" style="left:676px;top:439px;width:10px;height:19px;background:#3b514d;"></div>
<div class="a" style="left:548px;top:117px;width:1288px;height:443px;overflow:hidden">
<div class="cl" style="left:88px;top:10px"><span class="r">MAV_RESULT</span> <span class="cls">GCS_MAVLINK_Copter</span>::<span class="f">handle_command_long_packet</span>(<span class="k">const</span> <span class="r">mavlink_command_long_t</span> &amp;packet)</div>
<div class="cl" style="left:88px;top:29px">{</div>
<div class="cl" style="left:88px;top:48px">    <span class="k">switch</span>(packet.<span class="pi">command</span>) {</div>
<div class="cl" style="left:88px;top:67px"></div>
<div class="cl" style="left:88px;top:86px">    <span class="k">case</span> MAV_CMD_NAV_TAKEOFF: <span style="color:#ffef28;font-weight:bold">{</span></div>
<div class="cl" style="left:88px;top:105px">        <span class="c">// param3 : horizontal navigation by pilot acceptable</span></div>
<div class="cl" style="left:88px;top:124px">        <span class="c">// param4 : yaw angle   (not supported)</span></div>
<div class="cl" style="left:88px;top:143px">        <span class="c">// param5 : latitude    (not supported)</span></div>
<div class="cl" style="left:88px;top:162px">        <span class="c">// param6 : longitude   (not supported)</span></div>
<div class="cl" style="left:88px;top:181px">        <span class="c">// param7 : altitude [metres]</span></div>
<div class="cl" style="left:88px;top:200px"></div>
<div class="cl" style="left:88px;top:219px">        <span class="k">float</span> takeoff_alt = packet.<span class="pi">param7</span> * <span class="n">100</span><span class="o">;</span>      <span class="c">// Convert m to cm</span></div>
<div class="cl" style="left:88px;top:238px"></div>
<div class="cl" style="left:88px;top:257px">        <span class="k">if</span> (!copter.<span class="p">flightmode</span>-&gt;do_user_takeoff(takeoff_alt<span class="o">,</span> is_zero(packet.<span class="pi">param3</span>))) {</div>
<div class="cl" style="left:88px;top:276px">            <span class="k">return</span> MAV_RESULT_FAILED<span class="o">;</span></div>
<div class="cl" style="left:88px;top:295px">        }</div>
<div class="cl" style="left:88px;top:314px">        <span class="k">return</span> MAV_RESULT_ACCEPTED<span class="o">;</span></div>
<div class="cl" style="left:88px;top:333px">    <span style="color:#ffef28;font-weight:bold">}</span></div>
<div class="cl" style="left:88px;top:352px"></div>
<div class="cl" style="left:88px;top:371px">    <span class="k">case</span> MAV_CMD_NAV_LOITER_UNLIM:</div>
<div class="cl" style="left:88px;top:390px">        <span class="k">if</span> (!copter.set_mode(<span class="pi">LOITER</span><span class="o">,</span> <span class="pi">MODE_REASON_GCS_COMMAND</span>)) {</div>
<div class="cl" style="left:88px;top:409px">            <span class="k">return</span> MAV_RESULT_FAILED<span class="o">;</span></div>
<div class="cl" style="left:88px;top:428px">        }</div>
<div class="cl" style="left:88px;top:447px">        <span class="k">return</span> MAV_RESULT_ACCEPTED<span class="o">;</span></div>
</div>
<svg class="a" style="left:602px;top:120px;" width="10" height="10" viewBox="0 0 10 10"><path d="M1.5 1.5L8.5 8.5" stroke="#5aa0cf" stroke-width="1.3"/><path d="M0 0H4.5L0 4.5Z M10 10H5.5L10 5.5Z" fill="#5aa0cf"/><path d="M1.5 8.5L8.5 1.5" stroke="#2fb84e" stroke-width="1.6"/><path d="M10 0H5L10 5Z M0 10H5L0 5Z" fill="#2fb84e"/></svg>
<svg class="a" style="left:599px;top:364px;" width="17" height="17" viewBox="0 0 17 17"><circle cx="8.3" cy="9.3" r="6.8" fill="#db5c5c"/><path d="M5.5 6.5L8.5 9.2L14.5 2.5" stroke="#313335" stroke-width="3.2" fill="none"/><path d="M5.5 6.5L8.5 9.2L14.5 2.5" stroke="#e0e0e0" stroke-width="1.6" fill="none"/></svg>
<div class="a" style="left:637px;top:551px;width:564px;height:8px;background:rgba(140,140,140,0.38);border-radius:1px"></div>
<svg class="a" style="left:1841px;top:119px;" width="11" height="11" viewBox="0 0 11 11"><circle cx="5.5" cy="5.5" r="5.5" fill="#c93b3b"/><rect x="4.6" y="2" width="1.8" height="5" fill="#2b2b2b"/><rect x="4.6" y="8" width="1.8" height="1.6" fill="#2b2b2b"/></svg>
<div class="a" style="left:1839px;top:133px;width:14px;height:1px;background:#d7a21e;"></div>
<div class="a" style="left:1839px;top:134px;width:14px;height:3px;background:#b73535;"></div>
<div class="a" style="left:1839px;top:139px;width:14px;height:2px;background:#b73535;"></div>
<div class="a" style="left:1839px;top:143px;width:14px;height:2px;background:#b73535;"></div>
<div class="a" style="left:1839px;top:151px;width:14px;height:2px;background:#b73535;"></div>
<div class="a" style="left:1839px;top:155px;width:14px;height:5px;background:#b73535;"></div>
<div class="a" style="left:1839px;top:161px;width:14px;height:2px;background:#b73535;"></div>
<div class="a" style="left:1839px;top:171px;width:14px;height:2px;background:#d7a21e;"></div>
<div class="a" style="left:1839px;top:177px;width:14px;height:2px;background:#b73535;"></div>
<div class="a" style="left:1839px;top:182px;width:14px;height:2px;background:#d7a21e;"></div>
<div class="a" style="left:1839px;top:189px;width:14px;height:2px;background:#b73535;"></div>
<div class="a" style="left:1839px;top:193px;width:14px;height:2px;background:#b73535;"></div>
<div class="a" style="left:1839px;top:196px;width:14px;height:2px;background:#b73535;"></div>
<div class="a" style="left:1839px;top:200px;width:14px;height:7px;background:#b73535;"></div>
<div class="a" style="left:1839px;top:209px;width:14px;height:1px;background:#b73535;"></div>
<div class="a" style="left:1839px;top:211px;width:14px;height:16px;background:#b73535;"></div>
<div class="a" style="left:1839px;top:229px;width:14px;height:5px;background:#b73535;"></div>
<div class="a" style="left:1839px;top:235px;width:14px;height:2px;background:#d7a21e;"></div>
<div class="a" style="left:1839px;top:238px;width:14px;height:2px;background:#d7a21e;"></div>
<div class="a" style="left:1839px;top:241px;width:14px;height:4px;background:#d7a21e;"></div>
<div class="a" style="left:1839px;top:246px;width:14px;height:4px;background:#d7a21e;"></div>
<div class="a" style="left:1839px;top:251px;width:14px;height:4px;background:#d7a21e;"></div>
<div class="a" style="left:1839px;top:256px;width:14px;height:7px;background:#d7a21e;"></div>
<div class="a" style="left:1839px;top:264px;width:14px;height:7px;background:#d7a21e;"></div>
<div class="a" style="left:1839px;top:275px;width:14px;height:3px;background:#d7a21e;"></div>
<div class="a" style="left:1839px;top:280px;width:14px;height:2px;background:#b73535;"></div>
<div class="a" style="left:1839px;top:283px;width:14px;height:2px;background:#b73535;"></div>
<div class="a" style="left:1839px;top:286px;width:14px;height:3px;background:#b73535;"></div>
<div class="a" style="left:1839px;top:291px;width:14px;height:7px;background:#b73535;"></div>
<div class="a" style="left:1839px;top:413px;width:14px;height:2px;background:#d7a21e;"></div>
<div class="a" style="left:1839px;top:418px;width:14px;height:2px;background:#d7a21e;"></div>
<div class="a" style="left:1839px;top:428px;width:14px;height:2px;background:#d7a21e;"></div>
<div class="a" style="left:1839px;top:435px;width:14px;height:2px;background:#d7a21e;"></div>
<div class="a" style="left:1839px;top:479px;width:14px;height:6px;background:#d7a21e;"></div>
<div class="a" style="left:1839px;top:524px;width:14px;height:2px;background:#b73535;"></div>
<div class="a" style="left:1839px;top:528px;width:14px;height:1px;background:#d7a21e;"></div>
<div class="a" style="left:1839px;top:530px;width:14px;height:14px;background:#b73535;"></div>
<div class="a" style="left:1839px;top:547px;width:14px;height:1.5px;background:#b73535;"></div>
<div class="a" style="left:1839px;top:551px;width:14px;height:1.5px;background:#b73535;"></div>
<div class="a" style="left:1839px;top:555px;width:14px;height:1.5px;background:#b73535;"></div>
<div class="a" style="left:1839px;top:558px;width:14px;height:1.5px;background:#b73535;"></div>
<div class="a" style="left:1844px;top:309px;width:8px;height:34px;background:#9a9a9a;border-radius:2px"></div>
<div class="a" style="left:1839px;top:333px;width:4px;height:1.5px;background:#8a5040;"></div>
<svg class="a" style="left:640px;top:566px;" width="15" height="15" viewBox="0 0 15 15"><rect x="0" y="0" width="15" height="15" rx="2.5" fill="#9a5a6a"/><path d="M9.5 3.5Q7.5 3.2 7.3 5V12.5M5.5 6.5H9" stroke="#3a2a2e" stroke-width="1.4" fill="none"/></svg>
<div class="t" id="t45" style="transform:translateX(0.00px) scaleX(0.9931);left:659px;top:573px;font-size:15px;color:#bbbbbb;">GCS_MAVLINK_Copter::handle_command_long_packet</div>
<div class="t" id="t46" style="transform:translateX(-1.08px) scaleX(1.0822);left:30px;top:599px;font-size:15px;color:#bbbbbb;">Debug:</div>
<svg class="a" style="left:106px;top:601px;" width="6" height="6" viewBox="0 0 6 6"><circle cx="3" cy="3" r="2.6" fill="#22c32d"/></svg>
<div class="t" id="t47" style="transform:translateX(0.00px) scaleX(1.0597);left:116px;top:599px;font-size:15px;color:#bbbbbb;">arducopter</div>
<svg class="a" style="left:200px;top:599px;" width="8" height="8" viewBox="0 0 8 8"><path d="M0.5 0.5L7.5 7.5M7.5 0.5L0.5 7.5" stroke="#6f7a86" stroke-width="1.2"/></svg>
<svg class="a" style="left:1806px;top:591px;" width="13" height="14" viewBox="0 0 13 14"><g transform="translate(6.5 6.8)"><circle r="4.6" fill="#c0c3c6"/><rect x="-1.6" y="-6.8" width="3.2" height="3" rx="0.6" fill="#c0c3c6" transform="rotate(0)"/><rect x="-1.6" y="-6.8" width="3.2" height="3" rx="0.6" fill="#c0c3c6" transform="rotate(60)"/><rect x="-1.6" y="-6.8" width="3.2" height="3" rx="0.6" fill="#c0c3c6" transform="rotate(120)"/><rect x="-1.6" y="-6.8" width="3.2" height="3" rx="0.6" fill="#c0c3c6" transform="rotate(180)"/><rect x="-1.6" y="-6.8" width="3.2" height="3" rx="0.6" fill="#c0c3c6" transform="rotate(240)"/><rect x="-1.6" y="-6.8" width="3.2" height="3" rx="0.6" fill="#c0c3c6" transform="rotate(300)"/><circle r="1.9" fill="#3d4a5a"/></g></svg>
<div class="a" style="left:1832px;top:597px;width:12px;height:2px;background:#c8c8c8;"></div>
<div class="t" id="t48" style="transform:translateX(-0.97px) scaleX(0.9700);left:58px;top:626px;font-size:14px;color:#bbbbbb;">Debugger</div>
<svg class="a" style="left:128px;top:620px;" width="15" height="15" viewBox="0 0 15 15"><rect x="0.5" y="0.5" width="14" height="14" fill="#3c3f41" stroke="#8a8d8f"/><rect x="0.5" y="0.5" width="14" height="3" fill="#3e86a8"/><rect x="3" y="5.5" width="9" height="7" fill="#3e86a8"/><path d="M4.5 7.5H10.5M4.5 10H10.5" stroke="#c6dbe6"/></svg>
<div class="t" id="t49" style="transform:translateX(0.00px) scaleX(0.9112);left:147px;top:626px;font-size:14px;color:#bbbbbb;">Console</div>
<svg class="a" style="left:201px;top:623px;" width="12" height="8" viewBox="0 0 12 8"><path d="M0 4.5H7M5 2L7.5 4.5L5 7" stroke="#8a8d8f" stroke-width="1.1" fill="none"/><rect x="9" y="1" width="1.3" height="2.5" fill="#8a8d8f"/><rect x="10.8" y="1" width="1.2" height="2.5" fill="#8a8d8f"/></svg>
<div class="a" style="left:215px;top:617px;width:1px;height:20px;background:#4a4d4f;"></div>
<svg class="a" style="left:222px;top:621px;" width="14" height="13" viewBox="0 0 14 13"><rect x="0" y="0" width="14" height="3" fill="#3592c4"/><rect x="0" y="5" width="14" height="3" fill="#3592c4"/><rect x="0" y="10" width="14" height="3" fill="#afb1b3"/></svg>
<div class="a" style="left:245px;top:617px;width:1px;height:20px;background:#4a4d4f;"></div>
<svg class="a" style="left:254px;top:620px;" width="15" height="15" viewBox="0 0 15 15"><path d="M1.5 7Q4 1.5 8 3.5L11.5 6.5" stroke="#3592c4" stroke-width="2" fill="none"/><path d="M8 7.5H13V2.5Z" fill="#3592c4"/><rect x="1" y="12" width="13" height="2.2" fill="#afb1b3"/></svg>
<svg class="a" style="left:281px;top:619px;" width="14" height="16" viewBox="0 0 14 16"><path d="M7 0V8" stroke="#3592c4" stroke-width="2.2"/><path d="M2.5 6H11.5L7 11Z" fill="#3592c4"/><rect x="0.5" y="13" width="13" height="2.2" fill="#afb1b3"/></svg>
<svg class="a" style="left:307px;top:619px;" width="14" height="16" viewBox="0 0 14 16"><path d="M7 0V8" stroke="#6e6e6e" stroke-width="2.2"/><path d="M2.5 6H11.5L7 11Z" fill="#6e6e6e"/><rect x="0.5" y="13" width="13" height="2.2" fill="#6e6e6e"/></svg>
<svg class="a" style="left:333px;top:619px;" width="14" height="16" viewBox="0 0 14 16"><path d="M7 4V12" stroke="#3592c4" stroke-width="2.2"/><path d="M2.5 6H11.5L7 1Z" fill="#3592c4"/><rect x="0.5" y="13" width="13" height="2.2" fill="#afb1b3"/></svg>
<svg class="a" style="left:360px;top:620px;" width="15" height="16" viewBox="0 0 15 16"><path d="M1 1L8 8" stroke="#3592c4" stroke-width="2.2"/><path d="M9.5 9.5V3.5L3.5 9.5Z" fill="#3592c4"/><path d="M10 8.5H14M10 15H14M12 8.5V15" stroke="#d0d0d0" stroke-width="1"/></svg>
<div class="a" style="left:382px;top:617px;width:1px;height:20px;background:#4a4d4f;"></div>
<svg class="a" style="left:392px;top:620px;" width="14" height="14" viewBox="0 0 14 14"><rect x="0.5" y="0.5" width="13" height="13" fill="none" stroke="#afb1b3" stroke-width="1.4"/><rect x="2" y="2" width="10" height="3" fill="#afb1b3"/><path d="M3 7.5h2M6 7.5h2M9 7.5h2M3 10.5h2M6 10.5h2M9 10.5h2" stroke="#afb1b3" stroke-width="1.6"/></svg>
<svg class="a" style="left:31px;top:621px;" width="14" height="13" viewBox="0 0 14 13"><rect x="0" y="0" width="3.5" height="13" fill="#499c54"/><path d="M5 0L13.5 6.5L5 13Z" fill="#499c54"/></svg>
<svg class="a" style="left:32px;top:647px;" width="10" height="12" viewBox="0 0 10 12"><rect x="0" y="0" width="3" height="12" fill="#5f6163"/><rect x="6" y="0" width="3" height="12" fill="#5f6163"/></svg>
<div class="a" style="left:32px;top:675px;width:10px;height:10px;background:#c75450;"></div>
<div class="a" style="left:27px;top:696px;width:22px;height:1px;background:#4a4d4f;"></div>
<svg class="a" style="left:30px;top:705px;" width="15" height="15" viewBox="0 0 15 15"><circle cx="10" cy="4.5" r="4.3" fill="#db5c5c"/><circle cx="5" cy="10" r="5" fill="#db5c5c"/><circle cx="10" cy="4.5" r="4.5" fill="none" stroke="#3c3f41" stroke-width="0.8"/></svg>
<svg class="a" style="left:30px;top:731px;" width="15" height="15" viewBox="0 0 15 15"><circle cx="7.5" cy="7.5" r="6.5" fill="#db5c5c"/><path d="M1 14L14 1" stroke="#3c3f41" stroke-width="3.5"/><path d="M1.5 13.5L13.5 1.5" stroke="#afb1b3" stroke-width="1.6"/></svg>
<div class="a" style="left:27px;top:755px;width:22px;height:1px;background:#4a4d4f;"></div>
<svg class="a" style="left:31px;top:765px;" width="13" height="12" viewBox="0 0 13 12"><rect x="0" y="0" width="6" height="5" fill="#afb1b3"/><rect x="7" y="0" width="6" height="5" fill="#afb1b3"/><rect x="0" y="7" width="13" height="5" fill="#afb1b3"/></svg>
<svg class="a" style="left:30px;top:791px;" width="16" height="17" viewBox="0 0 16 17"><g transform="translate(6.5 6.8)"><circle r="4.6" fill="#afb1b3"/><rect x="-1.6" y="-6.8" width="3.2" height="3" rx="0.6" fill="#afb1b3" transform="rotate(0)"/><rect x="-1.6" y="-6.8" width="3.2" height="3" rx="0.6" fill="#afb1b3" transform="rotate(60)"/><rect x="-1.6" y="-6.8" width="3.2" height="3" rx="0.6" fill="#afb1b3" transform="rotate(120)"/><rect x="-1.6" y="-6.8" width="3.2" height="3" rx="0.6" fill="#afb1b3" transform="rotate(180)"/><rect x="-1.6" y="-6.8" width="3.2" height="3" rx="0.6" fill="#afb1b3" transform="rotate(240)"/><rect x="-1.6" y="-6.8" width="3.2" height="3" rx="0.6" fill="#afb1b3" transform="rotate(300)"/><circle r="1.9" fill="#3c3f41"/></g><path d="M11 13H16L13.5 16Z" fill="#afb1b3"/></svg>
<div class="a" style="left:27px;top:814px;width:22px;height:1px;background:#4a4d4f;"></div>
<svg class="a" style="left:29px;top:823px;" width="15" height="16" viewBox="0 0 15 16"><path d="M9 1L14 6L12.5 7L10 6L6.5 9.5L7 12L5.8 13L2.5 9.5L3.5 8.3L6 8.5L9.5 5L8.5 2.5Z" fill="#afb1b3"/><path d="M4.5 11L1 15" stroke="#afb1b3" stroke-width="1.6"/></svg>
<svg class="a" style="left:57px;top:652px;" width="16" height="16" viewBox="0 0 16 16"><rect x="0.5" y="0.5" width="10" height="10" fill="#3c3f41" stroke="#8e8e8e"/><rect x="1.5" y="2.5" width="10" height="10" fill="#3c3f41" stroke="#8e8e8e"/><rect x="2.5" y="4.5" width="10" height="9.5" fill="#3c3f41" stroke="#9c9c9c"/><rect x="4" y="6" width="7" height="6.5" fill="#3d7599"/><path d="M6.8 6.8L5 8L6.8 9.2M8.2 9.6L10 10.8L8.2 12" stroke="#f0f0f0" stroke-width="1" fill="none"/></svg>
<div class="t" id="t50" style="transform:translateX(-0.93px) scaleX(0.9258);left:75px;top:657px;font-size:14px;color:#bbbbbb;">Frames</div>
<svg class="a" style="left:395px;top:654px;" width="12" height="8" viewBox="0 0 12 8"><path d="M0 4.5H7M5 2L7.5 4.5L5 7" stroke="#8a8d8f" stroke-width="1.1" fill="none"/><rect x="9" y="1" width="1.3" height="2.5" fill="#8a8d8f"/><rect x="10.8" y="1" width="1.2" height="2.5" fill="#8a8d8f"/></svg>
<div class="a" style="left:55px;top:677px;width:293px;height:22px;border:1px solid #5e6163;border-radius:3px;background:#3c3f41"></div>
<svg class="a" style="left:62px;top:681px;" width="16" height="16" viewBox="0 0 16 16"><path d="M1 1.2H10.5M1 14.2H10.5" stroke="#b0b0b0" stroke-width="1.2"/><rect x="2" y="2" width="4" height="11.5" fill="#c99a3f"/><path d="M2.5 4.5h2.5M2.5 7.5h2.5M2.5 10.5h2.5" stroke="#8a6a2a" stroke-width="0.8"/><circle cx="10.5" cy="8" r="5.1" fill="#d9574f"/><path d="M8 7.8L10.2 10.2L13.2 6" stroke="#ffffff" stroke-width="1.4" fill="none"/></svg>
<div class="t" id="t51" style="transform:translateX(0.00px) scaleX(0.9583);left:81px;top:689px;font-size:15px;color:#bbbbbb;">Thread-1</div>
<svg class="a" style="left:335px;top:688px;" width="9" height="5" viewBox="0 0 9 5"><path d="M0 0H9L4.5 5Z" fill="#afb1b3"/></svg>
<svg class="a" style="left:364px;top:681px;" width="12" height="14" viewBox="0 0 12 14"><path d="M6 1.5V13.5" stroke="#afb1b3" stroke-width="1.6"/><path d="M1 6.5L6 1.5L11 6.5" stroke="#afb1b3" stroke-width="1.6" fill="none"/></svg>
<svg class="a" style="left:390px;top:681px;" width="12" height="14" viewBox="0 0 12 14"><path d="M6 0.5V12.5" stroke="#afb1b3" stroke-width="1.6"/><path d="M1 7.5L6 12.5L11 7.5" stroke="#afb1b3" stroke-width="1.6" fill="none"/></svg>
<div class="a" style="left:52px;top:704px;width:358px;height:1px;background:#323436;"></div>
<div class="a" style="left:52px;top:727px;width:358px;height:22px;background:#2f65ca;"></div>
<div class="a" style="left:52px;top:705px;width:358px;height:301px;overflow:hidden">
<svg class="a" style="left:8px;top:4px;" width="16" height="16" viewBox="0 0 16 16"><rect x="0.5" y="0.5" width="10" height="10" fill="#3c3f41" stroke="#8e8e8e"/><rect x="1.5" y="2.5" width="10" height="10" fill="#3c3f41" stroke="#8e8e8e"/><rect x="2.5" y="4.5" width="10" height="9.5" fill="#3c3f41" stroke="#9c9c9c"/><rect x="4" y="6" width="7" height="6.5" fill="#3d7599"/><path d="M6.8 6.8L5 8L6.8 9.2M8.2 9.6L10 10.8L8.2 12" stroke="#f0f0f0" stroke-width="1" fill="none"/></svg>
<div class="t" id="t52" style="left:26px;top:12px;font-size:15px;color:#bbbbbb;transform:scaleX(0.98);">GCS_MAVLINK_Copter::handle_command_long_packet GCS_Mavlink.cpp:698</div>
<svg class="a" style="left:8px;top:26px;" width="16" height="16" viewBox="0 0 16 16"><rect x="0.5" y="0.5" width="10" height="10" fill="#2f65ca" stroke="#8e8e8e"/><rect x="1.5" y="2.5" width="10" height="10" fill="#2f65ca" stroke="#8e8e8e"/><rect x="2.5" y="4.5" width="10" height="9.5" fill="#2f65ca" stroke="#9c9c9c"/><rect x="4" y="6" width="7" height="6.5" fill="#3d7599"/><path d="M6.8 6.8L5 8L6.8 9.2M8.2 9.6L10 10.8L8.2 12" stroke="#f0f0f0" stroke-width="1" fill="none"/></svg>
<div class="t" id="t53" style="transform:translateX(0.00px) scaleX(0.9862);left:26px;top:34px;font-size:15px;color:#ffffff;">GCS_MAVLINK::handle_command_long</div>
<div class="t" id="t54" style="left:297.5px;top:34px;font-size:15px;color:#ffffff;font-style:italic;transform:scaleX(0.93);">GCS_Com.cpp:1234</div>
<svg class="a" style="left:8px;top:48px;" width="16" height="16" viewBox="0 0 16 16"><rect x="0.5" y="0.5" width="10" height="10" fill="#3c3f41" stroke="#8e8e8e"/><rect x="1.5" y="2.5" width="10" height="10" fill="#3c3f41" stroke="#8e8e8e"/><rect x="2.5" y="4.5" width="10" height="9.5" fill="#3c3f41" stroke="#9c9c9c"/><rect x="4" y="6" width="7" height="6.5" fill="#3d7599"/><path d="M6.8 6.8L5 8L6.8 9.2M8.2 9.6L10 10.8L8.2 12" stroke="#f0f0f0" stroke-width="1" fill="none"/></svg>
<div class="t" id="t55" style="transform:translateX(0.00px) scaleX(0.9806);left:26px;top:56px;font-size:15px;color:#bbbbbb;">GCS_MAVLINK::handle_common_message</div>
<div class="t" id="t56" style="left:318.7px;top:56px;font-size:15px;color:#8c8c8c;font-style:italic;transform:scaleX(0.93);">GCS_C.cpp:1234</div>
<svg class="a" style="left:8px;top:70px;" width="16" height="16" viewBox="0 0 16 16"><rect x="0.5" y="0.5" width="10" height="10" fill="#3c3f41" stroke="#8e8e8e"/><rect x="1.5" y="2.5" width="10" height="10" fill="#3c3f41" stroke="#8e8e8e"/><rect x="2.5" y="4.5" width="10" height="9.5" fill="#3c3f41" stroke="#9c9c9c"/><rect x="4" y="6" width="7" height="6.5" fill="#3d7599"/><path d="M6.8 6.8L5 8L6.8 9.2M8.2 9.6L10 10.8L8.2 12" stroke="#f0f0f0" stroke-width="1" fill="none"/></svg>
<div class="t" id="t57" style="transform:translateX(0.00px) scaleX(0.9815);left:26px;top:78px;font-size:15px;color:#bbbbbb;">GCS_MAVLINK_Copter::handleMessage</div>
<div class="t" id="t58" style="left:298.6px;top:78px;font-size:15px;color:#8c8c8c;font-style:italic;transform:scaleX(0.93);">GCS_Mav.cpp:1234</div>
<svg class="a" style="left:8px;top:92px;" width="16" height="16" viewBox="0 0 16 16"><rect x="0.5" y="0.5" width="10" height="10" fill="#3c3f41" stroke="#8e8e8e"/><rect x="1.5" y="2.5" width="10" height="10" fill="#3c3f41" stroke="#8e8e8e"/><rect x="2.5" y="4.5" width="10" height="9.5" fill="#3c3f41" stroke="#9c9c9c"/><rect x="4" y="6" width="7" height="6.5" fill="#3d7599"/><path d="M6.8 6.8L5 8L6.8 9.2M8.2 9.6L10 10.8L8.2 12" stroke="#f0f0f0" stroke-width="1" fill="none"/></svg>
<div class="t" id="t59" style="transform:translateX(0.00px) scaleX(0.9691);left:26px;top:100px;font-size:15px;color:#bbbbbb;">GCS_MAVLINK::packetReceived</div>
<div class="t" id="t60" style="left:244px;top:100px;font-size:15px;color:#8c8c8c;font-style:italic;transform:scaleX(0.93);">GCS_Common.cpp.cpp:1234</div>
<svg class="a" style="left:8px;top:114px;" width="16" height="16" viewBox="0 0 16 16"><rect x="0.5" y="0.5" width="10" height="10" fill="#3c3f41" stroke="#8e8e8e"/><rect x="1.5" y="2.5" width="10" height="10" fill="#3c3f41" stroke="#8e8e8e"/><rect x="2.5" y="4.5" width="10" height="9.5" fill="#3c3f41" stroke="#9c9c9c"/><rect x="4" y="6" width="7" height="6.5" fill="#3d7599"/><path d="M6.8 6.8L5 8L6.8 9.2M8.2 9.6L10 10.8L8.2 12" stroke="#f0f0f0" stroke-width="1" fill="none"/></svg>
<div class="t" id="t61" style="transform:translateX(0.00px) scaleX(0.9756);left:26px;top:122px;font-size:15px;color:#bbbbbb;">GCS_MAVLINK_Copter::packetReceived</div>
<div class="t" id="t62" style="left:298.6px;top:122px;font-size:15px;color:#8c8c8c;font-style:italic;transform:scaleX(0.93);">GCS_Mav.cpp:1234</div>
<svg class="a" style="left:8px;top:136px;" width="16" height="16" viewBox="0 0 16 16"><rect x="0.5" y="0.5" width="10" height="10" fill="#3c3f41" stroke="#8e8e8e"/><rect x="1.5" y="2.5" width="10" height="10" fill="#3c3f41" stroke="#8e8e8e"/><rect x="2.5" y="4.5" width="10" height="9.5" fill="#3c3f41" stroke="#9c9c9c"/><rect x="4" y="6" width="7" height="6.5" fill="#3d7599"/><path d="M6.8 6.8L5 8L6.8 9.2M8.2 9.6L10 10.8L8.2 12" stroke="#f0f0f0" stroke-width="1" fill="none"/></svg>
<div class="t" id="t63" style="transform:translateX(0.00px) scaleX(0.9764);left:26px;top:144px;font-size:15px;color:#bbbbbb;">GCS_MAVLINK::update</div>
<div class="t" id="t64" style="transform:translateX(0.00px) scaleX(0.9169);left:186.3px;top:144px;font-size:15px;color:#8c8c8c;font-style:italic;">GCS_Common.cpp:934</div>
<svg class="a" style="left:8px;top:158px;" width="16" height="16" viewBox="0 0 16 16"><rect x="0.5" y="0.5" width="10" height="10" fill="#3c3f41" stroke="#8e8e8e"/><rect x="1.5" y="2.5" width="10" height="10" fill="#3c3f41" stroke="#8e8e8e"/><rect x="2.5" y="4.5" width="10" height="9.5" fill="#3c3f41" stroke="#9c9c9c"/><rect x="4" y="6" width="7" height="6.5" fill="#3d7599"/><path d="M6.8 6.8L5 8L6.8 9.2M8.2 9.6L10 10.8L8.2 12" stroke="#f0f0f0" stroke-width="1" fill="none"/></svg>
<div class="t" id="t65" style="transform:translateX(0.00px) scaleX(0.9725);left:26px;top:166px;font-size:15px;color:#bbbbbb;">GCS::update</div>
<div class="t" id="t66" style="transform:translateX(0.00px) scaleX(0.9100);left:114.6px;top:166px;font-size:15px;color:#8c8c8c;font-style:italic;">GCS_Common.cpp:1359</div>
<svg class="a" style="left:8px;top:180px;" width="16" height="16" viewBox="0 0 16 16"><rect x="0.5" y="0.5" width="10" height="10" fill="#3c3f41" stroke="#8e8e8e"/><rect x="1.5" y="2.5" width="10" height="10" fill="#3c3f41" stroke="#8e8e8e"/><rect x="2.5" y="4.5" width="10" height="9.5" fill="#3c3f41" stroke="#9c9c9c"/><rect x="4" y="6" width="7" height="6.5" fill="#3d7599"/><path d="M6.8 6.8L5 8L6.8 9.2M8.2 9.6L10 10.8L8.2 12" stroke="#f0f0f0" stroke-width="1" fill="none"/></svg>
<div class="t" id="t67" style="transform:translateX(0.00px) scaleX(1.0065);left:26px;top:188px;font-size:15px;color:#bbbbbb;">Copter::gcs_check_input</div>
<div class="t" id="t68" style="transform:translateX(0.00px) scaleX(0.9391);left:198.4px;top:188px;font-size:15px;color:#8c8c8c;font-style:italic;">GCS_Mavlink.cpp:1517</div>
<svg class="a" style="left:8px;top:202px;" width="16" height="16" viewBox="0 0 16 16"><rect x="0.5" y="0.5" width="10" height="10" fill="#3c3f41" stroke="#8e8e8e"/><rect x="1.5" y="2.5" width="10" height="10" fill="#3c3f41" stroke="#8e8e8e"/><rect x="2.5" y="4.5" width="10" height="9.5" fill="#3c3f41" stroke="#9c9c9c"/><rect x="4" y="6" width="7" height="6.5" fill="#3d7599"/><path d="M6.8 6.8L5 8L6.8 9.2M8.2 9.6L10 10.8L8.2 12" stroke="#f0f0f0" stroke-width="1" fill="none"/></svg>
<div class="t" id="t69" style="left:26px;top:210px;font-size:15px;color:#bbbbbb;transform:scaleX(1.0);">Functor&lt;void&gt;::method_wrapper&lt;Copter, &amp;Copter::gcs_check_input&gt;</div>
<svg class="a" style="left:8px;top:224px;" width="16" height="16" viewBox="0 0 16 16"><rect x="0.5" y="0.5" width="10" height="10" fill="#3c3f41" stroke="#8e8e8e"/><rect x="1.5" y="2.5" width="10" height="10" fill="#3c3f41" stroke="#8e8e8e"/><rect x="2.5" y="4.5" width="10" height="9.5" fill="#3c3f41" stroke="#9c9c9c"/><rect x="4" y="6" width="7" height="6.5" fill="#3d7599"/><path d="M6.8 6.8L5 8L6.8 9.2M8.2 9.6L10 10.8L8.2 12" stroke="#f0f0f0" stroke-width="1" fill="none"/></svg>
<div class="t" id="t70" style="transform:translateX(-1.06px) scaleX(1.0563);left:26px;top:232px;font-size:15px;color:#bbbbbb;">Functor&lt;void&gt;::operator()</div>
<div class="t" id="t71" style="transform:translateX(0.00px) scaleX(1.0470);left:208.60000000000002px;top:232px;font-size:15px;color:#8c8c8c;font-style:italic;">functor.h:54</div>
<svg class="a" style="left:8px;top:246px;" width="16" height="16" viewBox="0 0 16 16"><rect x="0.5" y="0.5" width="10" height="10" fill="#3c3f41" stroke="#8e8e8e"/><rect x="1.5" y="2.5" width="10" height="10" fill="#3c3f41" stroke="#8e8e8e"/><rect x="2.5" y="4.5" width="10" height="9.5" fill="#3c3f41" stroke="#9c9c9c"/><rect x="4" y="6" width="7" height="6.5" fill="#3d7599"/><path d="M6.8 6.8L5 8L6.8 9.2M8.2 9.6L10 10.8L8.2 12" stroke="#f0f0f0" stroke-width="1" fill="none"/></svg>
<div class="t" id="t72" style="transform:translateX(0.00px) scaleX(0.9987);left:26px;top:254px;font-size:15px;color:#bbbbbb;">AP_Scheduler::run</div>
<div class="t" id="t73" style="transform:translateX(0.94px) scaleX(0.9447);left:156px;top:254px;font-size:15px;color:#8c8c8c;font-style:italic;">AP_Scheduler.cpp:169</div>
<svg class="a" style="left:8px;top:268px;" width="16" height="16" viewBox="0 0 16 16"><rect x="0.5" y="0.5" width="10" height="10" fill="#3c3f41" stroke="#8e8e8e"/><rect x="1.5" y="2.5" width="10" height="10" fill="#3c3f41" stroke="#8e8e8e"/><rect x="2.5" y="4.5" width="10" height="9.5" fill="#3c3f41" stroke="#9c9c9c"/><rect x="4" y="6" width="7" height="6.5" fill="#3d7599"/><path d="M6.8 6.8L5 8L6.8 9.2M8.2 9.6L10 10.8L8.2 12" stroke="#f0f0f0" stroke-width="1" fill="none"/></svg>
<div class="t" id="t74" style="transform:translateX(0.00px) scaleX(1.0011);left:26px;top:276px;font-size:15px;color:#bbbbbb;">AP_Scheduler::loop</div>
<div class="t" id="t75" style="transform:translateX(0.94px) scaleX(0.9421);left:163px;top:276px;font-size:15px;color:#8c8c8c;font-style:italic;">AP_Scheduler.cpp:263</div>
<svg class="a" style="left:8px;top:290px;" width="16" height="16" viewBox="0 0 16 16"><rect x="0.5" y="0.5" width="10" height="10" fill="#3c3f41" stroke="#8e8e8e"/><rect x="1.5" y="2.5" width="10" height="10" fill="#3c3f41" stroke="#8e8e8e"/><rect x="2.5" y="4.5" width="10" height="9.5" fill="#3c3f41" stroke="#9c9c9c"/><rect x="4" y="6" width="7" height="6.5" fill="#3d7599"/><path d="M6.8 6.8L5 8L6.8 9.2M8.2 9.6L10 10.8L8.2 12" stroke="#f0f0f0" stroke-width="1" fill="none"/></svg>
<div class="t" id="t76" style="transform:translateX(0.00px) scaleX(1.0446);left:26px;top:298px;font-size:15px;color:#bbbbbb;">Copter::loop</div>
<div class="t" id="t77" style="transform:translateX(0.98px) scaleX(0.9825);left:116px;top:298px;font-size:15px;color:#8c8c8c;font-style:italic;">ArduCopter.cpp:214</div>
</div>
<div class="a" style="left:401px;top:705px;width:9px;height:220px;background:rgba(130,134,138,0.35);"></div>
<div class="a" style="left:52px;top:997px;width:202px;height:9px;background:rgba(130,134,138,0.35);"></div>
<svg class="a" style="left:417px;top:652px;" width="13" height="13" viewBox="0 0 13 13"><rect x="0" y="0" width="12.5" height="3.3" fill="#c69c5d"/><rect x="0" y="4.5" width="12.5" height="3" fill="#c69c5d"/><rect x="0" y="8.7" width="12.5" height="3.3" fill="#c69c5d"/></svg>
<div class="t" id="t78" style="transform:translateX(0.00px) scaleX(0.9943);left:434px;top:657px;font-size:14px;color:#bbbbbb;">Variables</div>
<svg class="a" style="left:494px;top:654px;" width="12" height="8" viewBox="0 0 12 8"><path d="M0 4.5H7M5 2L7.5 4.5L5 7" stroke="#8a8d8f" stroke-width="1.1" fill="none"/><rect x="9" y="1" width="1.3" height="2.5" fill="#8a8d8f"/><rect x="10.8" y="1" width="1.2" height="2.5" fill="#8a8d8f"/></svg>
<svg class="a" style="left:513px;top:651px;" width="16" height="15" viewBox="0 0 16 15"><rect x="0.5" y="0.5" width="14" height="13" fill="#2d3e4c" stroke="#9aa7b0"/><rect x="0.5" y="0.5" width="14" height="2.5" fill="#3e86a8"/><path d="M4 5L8.5 8L4 11" stroke="#3e86a8" stroke-width="1.6" fill="none"/></svg>
<div class="t" id="t79" style="transform:translateX(0.00px) scaleX(0.8333);left:532px;top:657px;font-size:14px;color:#bbbbbb;">GDB</div>
<svg class="a" style="left:560px;top:654px;" width="12" height="8" viewBox="0 0 12 8"><path d="M0 4.5H7M5 2L7.5 4.5L5 7" stroke="#8a8d8f" stroke-width="1.1" fill="none"/><rect x="9" y="1" width="1.3" height="2.5" fill="#8a8d8f"/><rect x="10.8" y="1" width="1.2" height="2.5" fill="#8a8d8f"/></svg>
<svg class="a" style="left:417px;top:681px;" width="12" height="12" viewBox="0 0 12 12"><path d="M6 0V12M0 6H12" stroke="#afb1b3" stroke-width="2"/></svg>
<div class="a" style="left:417px;top:712px;width:11px;height:2px;background:#5a5d5f;"></div>
<svg class="a" style="left:417px;top:734px;" width="12" height="7" viewBox="0 0 12 7"><path d="M0 7L6 0L12 7Z" fill="#55585a"/></svg>
<svg class="a" style="left:417px;top:759px;" width="12" height="7" viewBox="0 0 12 7"><path d="M0 0L6 7L12 0Z" fill="#55585a"/></svg>
<svg class="a" style="left:416px;top:783px;" width="14" height="14" viewBox="0 0 14 14"><rect x="0.5" y="0.5" width="9" height="10" fill="none" stroke="#55585a"/><rect x="3.5" y="3.5" width="10" height="10" fill="#3c3f41" stroke="#55585a"/></svg>
<div class="a" style="left:412px;top:806px;width:20px;height:20px;border:1px solid #5e6163;border-radius:3px;background:#4b4e50"></div>
<svg class="a" style="left:415px;top:811px;" width="15" height="10" viewBox="0 0 15 10"><circle cx="4" cy="5" r="3" stroke="#d0d0d0" stroke-width="1.5" fill="none"/><circle cx="11" cy="5" r="3" stroke="#d0d0d0" stroke-width="1.5" fill="none"/><path d="M7 4.5H8" stroke="#d0d0d0" stroke-width="1.5"/></svg>
<svg class="a" style="left:440px;top:681px;" width="9" height="9" viewBox="0 0 9 9"><path d="M0.5 0.5L8 4.5L0.5 8.5Z" fill="#afb1b3"/></svg>
<svg class="a" style="left:458px;top:679px;" width="13" height="13" viewBox="0 0 13 13"><rect x="0" y="0" width="12.5" height="3.3" fill="#c69c5d"/><rect x="0" y="4.5" width="12.5" height="3" fill="#c69c5d"/><rect x="0" y="8.7" width="12.5" height="3.3" fill="#c69c5d"/></svg>
<div class="t" id="t80" style="transform:translateX(0.00px) scaleX(1.1382);left:475px;top:686px;font-size:15px;color:#ec7c6c;">this</div>
<div class="t" id="t81" style="left:504px;top:686px;font-size:15px;color:#bbbbbb;">=</div>
<div class="t" id="t82" style="transform:translateX(0.00px) scaleX(0.9825);left:515px;top:686px;font-size:15px;color:#8c8c8c;">{GCS_MAVLINK_Copter * const | 0x5561df353db0}</div>
<div class="t" id="t83" style="transform:translateX(0.00px) scaleX(1.0141);left:855px;top:686px;font-size:15px;color:#bbbbbb;">0x5561df353db0</div>
<svg class="a" style="left:440px;top:703px;" width="9" height="9" viewBox="0 0 9 9"><path d="M0.5 0.5L8 4.5L0.5 8.5Z" fill="#afb1b3"/></svg>
<svg class="a" style="left:458px;top:701px;" width="13" height="13" viewBox="0 0 13 13"><rect x="0" y="0" width="12.5" height="3.3" fill="#c69c5d"/><rect x="0" y="4.5" width="12.5" height="3" fill="#c69c5d"/><rect x="0" y="8.7" width="12.5" height="3.3" fill="#c69c5d"/></svg>
<div class="t" id="t84" style="transform:translateX(-1.07px) scaleX(1.0743);left:475px;top:708px;font-size:15px;color:#ec7c6c;">msg</div>
<div class="t" id="t85" style="left:507px;top:708px;font-size:15px;color:#bbbbbb;">=</div>
<div class="t" id="t86" style="transform:translateX(0.00px) scaleX(0.9989);left:518px;top:708px;font-size:15px;color:#8c8c8c;">{mavlink_message_t * | 0x7ffc7a387a90}</div>
<div class="t" id="t87" style="transform:translateX(0.00px) scaleX(1.0081);left:792px;top:708px;font-size:15px;color:#bbbbbb;">0x7ffc7a387a90</div>
<svg class="a" style="left:439px;top:725px;" width="10" height="9" viewBox="0 0 10 9"><path d="M0.5 0.5H9.5L5 8.5Z" fill="#afb1b3"/></svg>
<svg class="a" style="left:458px;top:723px;" width="13" height="13" viewBox="0 0 13 13"><rect x="0" y="0" width="12.5" height="3.3" fill="#c69c5d"/><rect x="0" y="4.5" width="12.5" height="3" fill="#c69c5d"/><rect x="0" y="8.7" width="12.5" height="3.3" fill="#c69c5d"/></svg>
<div class="t" id="t88" style="transform:translateX(0.00px) scaleX(0.9994);left:475px;top:730px;font-size:15px;color:#ec7c6c;">packet</div>
<div class="t" id="t89" style="left:523px;top:730px;font-size:15px;color:#bbbbbb;">=</div>
<div class="t" id="t90" style="transform:translateX(0.00px) scaleX(1.0311);left:535px;top:730px;font-size:15px;color:#8c8c8c;">{mavlink_command_long_t}</div>
<div class="t" id="t91" style="left:0px;top:730px;font-size:15px;color:#bbbbbb;"></div>
<svg class="a" style="left:476px;top:745px;" width="12" height="12" viewBox="0 0 12 12"><rect x="0.5" y="0.5" width="11" height="11" fill="none" stroke="#9e9e9e"/><rect x="2" y="2" width="8" height="8" fill="#3a6d8e"/><path d="M3.6 2.6V5.6M7.9 6.6V9.6" stroke="#f2f2f2" stroke-width="1"/><rect x="5.3" y="2.8" width="2.4" height="2.6" rx="1" fill="none" stroke="#f2f2f2" stroke-width="0.8"/><rect x="3.3" y="6.8" width="2.4" height="2.6" rx="1" fill="none" stroke="#f2f2f2" stroke-width="0.8"/></svg>
<div class="t" id="t92" style="transform:translateX(0.00px) scaleX(0.9898);left:494px;top:752px;font-size:15px;color:#ec7c6c;">param1</div>
<div class="t" id="t93" style="left:548px;top:752px;font-size:15px;color:#bbbbbb;">=</div>
<div class="t" id="t94" style="transform:translateX(0.00px) scaleX(1.0922);left:559.5px;top:752px;font-size:15px;color:#8c8c8c;">{float}</div>
<div class="t" id="t95" style="transform:translateX(0.00px) scaleX(0.9250);left:605.6px;top:752px;font-size:15px;color:#bbbbbb;">0</div>
<svg class="a" style="left:476px;top:767px;" width="12" height="12" viewBox="0 0 12 12"><rect x="0.5" y="0.5" width="11" height="11" fill="none" stroke="#9e9e9e"/><rect x="2" y="2" width="8" height="8" fill="#3a6d8e"/><path d="M3.6 2.6V5.6M7.9 6.6V9.6" stroke="#f2f2f2" stroke-width="1"/><rect x="5.3" y="2.8" width="2.4" height="2.6" rx="1" fill="none" stroke="#f2f2f2" stroke-width="0.8"/><rect x="3.3" y="6.8" width="2.4" height="2.6" rx="1" fill="none" stroke="#f2f2f2" stroke-width="0.8"/></svg>
<div class="t" id="t96" style="transform:translateX(0.00px) scaleX(0.9898);left:494px;top:774px;font-size:15px;color:#ec7c6c;">param2</div>
<div class="t" id="t97" style="left:548px;top:774px;font-size:15px;color:#bbbbbb;">=</div>
<div class="t" id="t98" style="transform:translateX(0.00px) scaleX(1.0922);left:559.5px;top:774px;font-size:15px;color:#8c8c8c;">{float}</div>
<div class="t" id="t99" style="transform:translateX(0.00px) scaleX(0.9250);left:605.6px;top:774px;font-size:15px;color:#bbbbbb;">0</div>
<svg class="a" style="left:476px;top:789px;" width="12" height="12" viewBox="0 0 12 12"><rect x="0.5" y="0.5" width="11" height="11" fill="none" stroke="#9e9e9e"/><rect x="2" y="2" width="8" height="8" fill="#3a6d8e"/><path d="M3.6 2.6V5.6M7.9 6.6V9.6" stroke="#f2f2f2" stroke-width="1"/><rect x="5.3" y="2.8" width="2.4" height="2.6" rx="1" fill="none" stroke="#f2f2f2" stroke-width="0.8"/><rect x="3.3" y="6.8" width="2.4" height="2.6" rx="1" fill="none" stroke="#f2f2f2" stroke-width="0.8"/></svg>
<div class="t" id="t100" style="transform:translateX(0.00px) scaleX(0.9898);left:494px;top:796px;font-size:15px;color:#ec7c6c;">param3</div>
<div class="t" id="t101" style="left:548px;top:796px;font-size:15px;color:#bbbbbb;">=</div>
<div class="t" id="t102" style="transform:translateX(0.00px) scaleX(1.0922);left:559.5px;top:796px;font-size:15px;color:#8c8c8c;">{float}</div>
<div class="t" id="t103" style="transform:translateX(0.00px) scaleX(0.9250);left:605.6px;top:796px;font-size:15px;color:#bbbbbb;">0</div>
<svg class="a" style="left:476px;top:811px;" width="12" height="12" viewBox="0 0 12 12"><rect x="0.5" y="0.5" width="11" height="11" fill="none" stroke="#9e9e9e"/><rect x="2" y="2" width="8" height="8" fill="#3a6d8e"/><path d="M3.6 2.6V5.6M7.9 6.6V9.6" stroke="#f2f2f2" stroke-width="1"/><rect x="5.3" y="2.8" width="2.4" height="2.6" rx="1" fill="none" stroke="#f2f2f2" stroke-width="0.8"/><rect x="3.3" y="6.8" width="2.4" height="2.6" rx="1" fill="none" stroke="#f2f2f2" stroke-width="0.8"/></svg>
<div class="t" id="t104" style="transform:translateX(0.00px) scaleX(0.9898);left:494px;top:818px;font-size:15px;color:#ec7c6c;">param4</div>
<div class="t" id="t105" style="left:548px;top:818px;font-size:15px;color:#bbbbbb;">=</div>
<div class="t" id="t106" style="transform:translateX(0.00px) scaleX(1.0922);left:559.5px;top:818px;font-size:15px;color:#8c8c8c;">{float}</div>
<div class="t" id="t107" style="transform:translateX(0.00px) scaleX(0.9250);left:605.6px;top:818px;font-size:15px;color:#bbbbbb;">0</div>
<svg class="a" style="left:476px;top:833px;" width="12" height="12" viewBox="0 0 12 12"><rect x="0.5" y="0.5" width="11" height="11" fill="none" stroke="#9e9e9e"/><rect x="2" y="2" width="8" height="8" fill="#3a6d8e"/><path d="M3.6 2.6V5.6M7.9 6.6V9.6" stroke="#f2f2f2" stroke-width="1"/><rect x="5.3" y="2.8" width="2.4" height="2.6" rx="1" fill="none" stroke="#f2f2f2" stroke-width="0.8"/><rect x="3.3" y="6.8" width="2.4" height="2.6" rx="1" fill="none" stroke="#f2f2f2" stroke-width="0.8"/></svg>
<div class="t" id="t108" style="transform:translateX(0.00px) scaleX(0.9898);left:494px;top:840px;font-size:15px;color:#ec7c6c;">param5</div>
<div class="t" id="t109" style="left:548px;top:840px;font-size:15px;color:#bbbbbb;">=</div>
<div class="t" id="t110" style="transform:translateX(0.00px) scaleX(1.0922);left:559.5px;top:840px;font-size:15px;color:#8c8c8c;">{float}</div>
<div class="t" id="t111" style="transform:translateX(0.00px) scaleX(0.9250);left:605.6px;top:840px;font-size:15px;color:#bbbbbb;">0</div>
<svg class="a" style="left:476px;top:855px;" width="12" height="12" viewBox="0 0 12 12"><rect x="0.5" y="0.5" width="11" height="11" fill="none" stroke="#9e9e9e"/><rect x="2" y="2" width="8" height="8" fill="#3a6d8e"/><path d="M3.6 2.6V5.6M7.9 6.6V9.6" stroke="#f2f2f2" stroke-width="1"/><rect x="5.3" y="2.8" width="2.4" height="2.6" rx="1" fill="none" stroke="#f2f2f2" stroke-width="0.8"/><rect x="3.3" y="6.8" width="2.4" height="2.6" rx="1" fill="none" stroke="#f2f2f2" stroke-width="0.8"/></svg>
<div class="t" id="t112" style="transform:translateX(0.00px) scaleX(0.9898);left:494px;top:862px;font-size:15px;color:#ec7c6c;">param6</div>
<div class="t" id="t113" style="left:548px;top:862px;font-size:15px;color:#bbbbbb;">=</div>
<div class="t" id="t114" style="transform:translateX(0.00px) scaleX(1.0922);left:559.5px;top:862px;font-size:15px;color:#8c8c8c;">{float}</div>
<div class="t" id="t115" style="transform:translateX(0.00px) scaleX(0.9250);left:605.6px;top:862px;font-size:15px;color:#bbbbbb;">0</div>
<svg class="a" style="left:476px;top:877px;" width="12" height="12" viewBox="0 0 12 12"><rect x="0.5" y="0.5" width="11" height="11" fill="none" stroke="#9e9e9e"/><rect x="2" y="2" width="8" height="8" fill="#3a6d8e"/><path d="M3.6 2.6V5.6M7.9 6.6V9.6" stroke="#f2f2f2" stroke-width="1"/><rect x="5.3" y="2.8" width="2.4" height="2.6" rx="1" fill="none" stroke="#f2f2f2" stroke-width="0.8"/><rect x="3.3" y="6.8" width="2.4" height="2.6" rx="1" fill="none" stroke="#f2f2f2" stroke-width="0.8"/></svg>
<div class="t" id="t116" style="transform:translateX(0.00px) scaleX(0.9898);left:494px;top:884px;font-size:15px;color:#ec7c6c;">param7</div>
<div class="t" id="t117" style="left:548px;top:884px;font-size:15px;color:#bbbbbb;">=</div>
<div class="t" id="t118" style="transform:translateX(0.00px) scaleX(1.0922);left:559.5px;top:884px;font-size:15px;color:#8c8c8c;">{float}</div>
<div class="t" id="t119" style="transform:translateX(0.00px) scaleX(0.9423);left:605.6px;top:884px;font-size:15px;color:#bbbbbb;">20</div>
<svg class="a" style="left:476px;top:899px;" width="12" height="12" viewBox="0 0 12 12"><rect x="0.5" y="0.5" width="11" height="11" fill="none" stroke="#9e9e9e"/><rect x="2" y="2" width="8" height="8" fill="#3a6d8e"/><path d="M3.6 2.6V5.6M7.9 6.6V9.6" stroke="#f2f2f2" stroke-width="1"/><rect x="5.3" y="2.8" width="2.4" height="2.6" rx="1" fill="none" stroke="#f2f2f2" stroke-width="0.8"/><rect x="3.3" y="6.8" width="2.4" height="2.6" rx="1" fill="none" stroke="#f2f2f2" stroke-width="0.8"/></svg>
<div class="t" id="t120" style="transform:translateX(0.00px) scaleX(1.0074);left:494px;top:906px;font-size:15px;color:#ec7c6c;">command</div>
<div class="t" id="t121" style="left:564px;top:906px;font-size:15px;color:#bbbbbb;">=</div>
<div class="t" id="t122" style="transform:translateX(0.00px) scaleX(1.0333);left:575.5px;top:906px;font-size:15px;color:#8c8c8c;">{uint16_t}</div>
<div class="t" id="t123" style="transform:translateX(0.00px) scaleX(0.9485);left:645.2px;top:906px;font-size:15px;color:#bbbbbb;">22</div>
<svg class="a" style="left:476px;top:921px;" width="12" height="12" viewBox="0 0 12 12"><rect x="0.5" y="0.5" width="11" height="11" fill="none" stroke="#9e9e9e"/><rect x="2" y="2" width="8" height="8" fill="#3a6d8e"/><path d="M3.6 2.6V5.6M7.9 6.6V9.6" stroke="#f2f2f2" stroke-width="1"/><rect x="5.3" y="2.8" width="2.4" height="2.6" rx="1" fill="none" stroke="#f2f2f2" stroke-width="0.8"/><rect x="3.3" y="6.8" width="2.4" height="2.6" rx="1" fill="none" stroke="#f2f2f2" stroke-width="0.8"/></svg>
<div class="t" id="t124" style="transform:translateX(0.00px) scaleX(1.0287);left:494px;top:928px;font-size:15px;color:#ec7c6c;">target_system</div>
<div class="t" id="t125" style="left:594.4px;top:928px;font-size:15px;color:#bbbbbb;">=</div>
<div class="t" id="t126" style="transform:translateX(0.00px) scaleX(1.0555);left:605.9px;top:928px;font-size:15px;color:#8c8c8c;">{uint8_t}</div>
<div class="t" id="t127" style="transform:translateX(-1.00px) scaleX(1.0007);left:668.2px;top:928px;font-size:15px;color:#bbbbbb;">1 &#x27;\001&#x27;</div>
<svg class="a" style="left:476px;top:943px;" width="12" height="12" viewBox="0 0 12 12"><rect x="0.5" y="0.5" width="11" height="11" fill="none" stroke="#9e9e9e"/><rect x="2" y="2" width="8" height="8" fill="#3a6d8e"/><path d="M3.6 2.6V5.6M7.9 6.6V9.6" stroke="#f2f2f2" stroke-width="1"/><rect x="5.3" y="2.8" width="2.4" height="2.6" rx="1" fill="none" stroke="#f2f2f2" stroke-width="0.8"/><rect x="3.3" y="6.8" width="2.4" height="2.6" rx="1" fill="none" stroke="#f2f2f2" stroke-width="0.8"/></svg>
<div class="t" id="t128" style="transform:translateX(0.00px) scaleX(1.0497);left:494px;top:950px;font-size:15px;color:#ec7c6c;">target_component</div>
<div class="t" id="t129" style="left:625.8px;top:950px;font-size:15px;color:#bbbbbb;">=</div>
<div class="t" id="t130" style="transform:translateX(0.00px) scaleX(1.0428);left:637.3px;top:950px;font-size:15px;color:#8c8c8c;">{uint8_t}</div>
<div class="t" id="t131" style="transform:translateX(0.00px) scaleX(0.9821);left:698.9000000000001px;top:950px;font-size:15px;color:#bbbbbb;">250 &#x27;\372&#x27;</div>
<svg class="a" style="left:476px;top:965px;" width="12" height="12" viewBox="0 0 12 12"><rect x="0.5" y="0.5" width="11" height="11" fill="none" stroke="#9e9e9e"/><rect x="2" y="2" width="8" height="8" fill="#3a6d8e"/><path d="M3.6 2.6V5.6M7.9 6.6V9.6" stroke="#f2f2f2" stroke-width="1"/><rect x="5.3" y="2.8" width="2.4" height="2.6" rx="1" fill="none" stroke="#f2f2f2" stroke-width="0.8"/><rect x="3.3" y="6.8" width="2.4" height="2.6" rx="1" fill="none" stroke="#f2f2f2" stroke-width="0.8"/></svg>
<div class="t" id="t132" style="transform:translateX(0.00px) scaleX(1.0853);left:494px;top:972px;font-size:15px;color:#ec7c6c;">confirmation</div>
<div class="t" id="t133" style="left:586.3px;top:972px;font-size:15px;color:#bbbbbb;">=</div>
<div class="t" id="t134" style="transform:translateX(0.00px) scaleX(1.0537);left:597.8px;top:972px;font-size:15px;color:#8c8c8c;">{uint8_t}</div>
<div class="t" id="t135" style="transform:translateX(0.00px) scaleX(0.9881);left:660.0px;top:972px;font-size:15px;color:#bbbbbb;">0 &#x27;\000&#x27;</div>
<svg class="a" style="left:32px;top:1013px;" width="13" height="14" viewBox="0 0 13 14"><ellipse cx="6" cy="8" rx="4.5" ry="5" fill="#afb1b3"/><path d="M1 4L11 12M11 4L1 12M0 8H12M3.5 1L5 3.5M8.5 1L7 3.5" stroke="#afb1b3" stroke-width="1.3"/><circle cx="10.5" cy="11.5" r="2.3" fill="#22c32d"/></svg>
<div class="t" id="t136" style="transform:translateX(0.00px) scaleX(0.9395);left:48px;top:1019px;font-size:13.5px;color:#dddddd;">5: Debug</div>
<div class="a" style="left:48px;top:1025px;width:8px;height:1px;background:#cccccc;"></div>
<svg class="a" style="left:123px;top:1013px;" width="11" height="10" viewBox="0 0 11 10"><path d="M0 2h2M0 5h2M0 8h2M3.5 2h6.5M3.5 5h6.5M3.5 8h6.5" stroke="#afb1b3" stroke-width="1.7"/></svg>
<div class="t" id="t137" style="transform:translateX(0.00px) scaleX(0.9200);left:138px;top:1019px;font-size:13.5px;color:#bbbbbb;">6: TODO</div>
<div class="a" style="left:138px;top:1025px;width:8px;height:1px;background:#9a9a9a;"></div>
<svg class="a" style="left:209px;top:1011px;" width="11" height="11" viewBox="0 0 11 11"><rect x="0" y="0" width="11" height="11" fill="#afb1b3"/><path d="M2 3L4.5 5.5L2 8" stroke="#3c3f41" stroke-width="1.2" fill="none"/></svg>
<div class="t" id="t138" style="transform:translateX(0.00px) scaleX(0.9801);left:225px;top:1019px;font-size:13.5px;color:#bbbbbb;">Terminal</div>
<svg class="a" style="left:301px;top:1011px;" width="12" height="12" viewBox="0 0 12 12"><path d="M1.5 12V1M1.5 6H6V9" stroke="#afb1b3" stroke-width="1.6" fill="none"/><path d="M8.5 1V8M6.5 3.5L8.5 1L10.5 3.5" stroke="#afb1b3" stroke-width="1.6" fill="none"/></svg>
<div class="t" id="t139" style="transform:translateX(0.00px) scaleX(0.9785);left:317px;top:1019px;font-size:13.5px;color:#bbbbbb;">9: Version Control</div>
<div class="a" style="left:317px;top:1025px;width:8px;height:1px;background:#9a9a9a;"></div>
<svg class="a" style="left:447px;top:1012px;" width="13" height="11" viewBox="0 0 13 11"><path d="M6.5 0L13 11H0Z" fill="#afb1b3"/><path d="M6.5 4L9.5 9.5H3.5Z" fill="#3c3f41"/></svg>
<div class="t" id="t140" style="transform:translateX(0.00px) scaleX(0.9467);left:464px;top:1019px;font-size:13.5px;color:#bbbbbb;">CMake</div>
<svg class="a" style="left:1745px;top:1011px;" width="14" height="15" viewBox="0 0 14 15"><path d="M3.2 12.3L3.8 10.3A5.8 5.8 0 1 1 6 12.4Z" stroke="#afb1b3" stroke-width="1.4" fill="none" stroke-linejoin="round"/></svg>
<div class="t" id="t141" style="transform:translateX(-0.98px) scaleX(0.9783);left:1762px;top:1019px;font-size:13.5px;color:#bbbbbb;">Event Log</div>
<svg class="a" style="left:10px;top:1036px;" width="13" height="13" viewBox="0 0 13 13"><rect x="0.5" y="3.5" width="9" height="9" fill="none" stroke="#afb1b3"/><path d="M3.5 0.5H12.5V9.5" stroke="#afb1b3" fill="none"/></svg>
<svg class="a" style="left:1266px;top:1035px;" width="15" height="15" viewBox="0 0 15 15"><circle cx="6" cy="6" r="4.5" fill="none" stroke="#6e7072" stroke-width="2" stroke-dasharray="2 1.5"/><circle cx="10" cy="10" r="4" fill="#6e7072"/><circle cx="10" cy="10" r="1.5" fill="#3c3f41"/></svg>
<div class="t" id="t142" style="transform:translateX(0.00px) scaleX(0.9679);left:1306px;top:1042px;font-size:15px;color:#bbbbbb;">705:6</div>
<div class="t" id="t143" style="transform:translateX(-0.98px) scaleX(0.9791);left:1353px;top:1042px;font-size:15px;color:#bbbbbb;">LF</div>
<svg class="a" style="left:1373px;top:1038px;" width="6" height="10" viewBox="0 0 6 10"><path d="M0.5 4L3 0.5L5.5 4ZM0.5 6L3 9.5L5.5 6Z" fill="#afb1b3"/></svg>
<div class="t" id="t144" style="transform:translateX(-0.92px) scaleX(0.9234);left:1390px;top:1042px;font-size:15px;color:#bbbbbb;">UTF-8</div>
<svg class="a" style="left:1436px;top:1038px;" width="6" height="10" viewBox="0 0 6 10"><path d="M0.5 4L3 0.5L5.5 4ZM0.5 6L3 9.5L5.5 6Z" fill="#afb1b3"/></svg>
<div class="t" id="t145" style="transform:translateX(0.00px) scaleX(1.0089);left:1455px;top:1042px;font-size:15px;color:#bbbbbb;">Git: master</div>
<svg class="a" style="left:1535px;top:1038px;" width="6" height="10" viewBox="0 0 6 10"><path d="M0.5 4L3 0.5L5.5 4ZM0.5 6L3 9.5L5.5 6Z" fill="#afb1b3"/></svg>
<div class="t" id="t146" style="transform:translateX(0.00px) scaleX(1.0504);left:1549px;top:1042px;font-size:15px;color:#bbbbbb;">Context: fake-target-for-clion [D]</div>
<svg class="a" style="left:1808px;top:1035px;" width="13" height="13" viewBox="0 0 13 13"><rect x="0.5" y="6" width="10" height="7" fill="#afb1b3"/><path d="M6.5 6V3.5Q6.5 1 9 1Q11.5 1 11.5 3.5V4.5" stroke="#afb1b3" stroke-width="1.4" fill="none"/></svg>
<svg class="a" style="left:1832px;top:1034px;" width="14" height="15" viewBox="0 0 14 15"><path d="M3 5Q3 1 7 1Q11 1 11 5Z" fill="none" stroke="#afb1b3" stroke-width="1.2"/><path d="M0.5 6H13.5" stroke="#afb1b3" stroke-width="1.3"/><circle cx="4.5" cy="9" r="2" fill="none" stroke="#afb1b3" stroke-width="1.1"/><circle cx="9.5" cy="9" r="2" fill="none" stroke="#afb1b3" stroke-width="1.1"/><path d="M3 12.5Q7 15.5 11 12.5" stroke="#afb1b3" stroke-width="1.2" fill="none"/></svg>
<svg class="a" style="left:1195px;top:475px;" width="9" height="19" viewBox="0 0 9 19"><path d="M1.5 2H3.5Q4.5 2 4.5 3V15.5Q4.5 16.5 3.5 16.5H1.5M7.5 2H5.5Q4.5 2 4.5 3M4.5 15.5Q4.5 16.5 5.5 16.5H7.5" stroke="#000" stroke-width="2.8" fill="none" stroke-linecap="round"/><path d="M1.5 2H3.5Q4.5 2 4.5 3V15.5Q4.5 16.5 3.5 16.5H1.5M7.5 2H5.5Q4.5 2 4.5 3M4.5 15.5Q4.5 16.5 5.5 16.5H7.5" stroke="#fff" stroke-width="1.2" fill="none"/></svg>
<div class="a" style="left:574px;top:645px;width:1px;height:24px;background:#323436;"></div>
<div class="a" style="left:507px;top:645px;width:1px;height:24px;background:#323436;"></div>
<svg class="a" style="left:81px;top:583px;" width="12" height="2" viewBox="0 0 12 2"><path d="M1 2L3 0H4V2Z" fill="#9aa7b0"/><rect x="5" y="0" width="5" height="2" fill="#9aa7b0"/></svg>
</body></html>
